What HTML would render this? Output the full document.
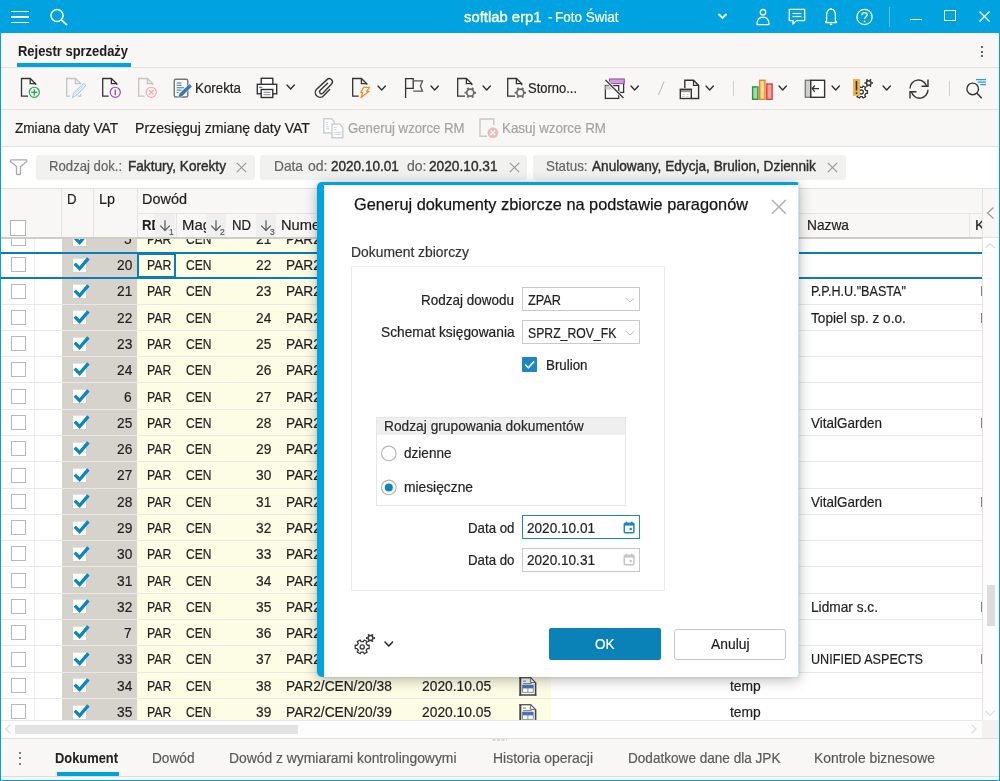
<!DOCTYPE html>
<html><head><meta charset="utf-8"><style>
html,body{margin:0;padding:0;}
body{width:1000px;height:781px;overflow:hidden;position:relative;font-family:"Liberation Sans",sans-serif;}
.t{position:absolute;white-space:nowrap;line-height:1;transform-origin:0 0;-webkit-text-stroke-width:0.2px;}
#root{position:absolute;left:0;top:0;width:1000px;height:781px;overflow:hidden;will-change:transform;background:#f8f7f6}
svg{overflow:visible}
</style></head><body>
<div id="root">
<div style="position:absolute;left:0.00px;top:0.00px;width:1000.00px;height:781.00px;background:#f8f7f6"></div>
<div style="position:absolute;left:0.00px;top:0.00px;width:1000.00px;height:33.00px;background:#00a3e0"></div>
<div style="position:absolute;left:11.00px;top:10.50px;width:18.00px;height:1.50px;background:#fff"></div>
<div style="position:absolute;left:11.00px;top:16.00px;width:18.00px;height:1.50px;background:#fff"></div>
<div style="position:absolute;left:11.00px;top:21.50px;width:18.00px;height:1.50px;background:#fff"></div>
<svg style="position:absolute;left:48.00px;top:7.00px;" width="24" height="22" viewBox="0 0 24 22"><circle cx="9" cy="8.5" r="6" fill="none" stroke="#fff" stroke-width="1.6"/><line x1="13.3" y1="12.8" x2="19" y2="18" stroke="#fff" stroke-width="1.7"/></svg>
<div class="t" style="left:464.00px;top:10.30px;font-size:14.30px;font-weight:400;color:#fff;transform:scaleX(1.0385);-webkit-text-stroke:0.35px #fff;">softlab erp1</div>
<div class="t" style="left:548.00px;top:10.30px;font-size:14.30px;font-weight:400;color:#fff;transform:scaleX(0.9661);">-</div>
<div class="t" style="left:555.00px;top:10.30px;font-size:14.30px;font-weight:400;color:#fff;transform:scaleX(0.9415);">Foto Świat</div>
<svg style="position:absolute;left:716.00px;top:11.00px;" width="13" height="10" viewBox="0 0 13 10"><polyline points="2.5,3 6.5,7 10.5,3" fill="none" stroke="#fff" stroke-width="1.8"/></svg>
<svg style="position:absolute;left:755.00px;top:8.00px;" width="16" height="19" viewBox="0 0 16 19"><circle cx="8" cy="4.2" r="2.7" fill="none" stroke="#fff" stroke-width="1.3"/><path d="M2,16.6 C2,11 4.5,9.2 8,9.2 C11.5,9.2 14,11 14,16.6 Z" fill="none" stroke="#fff" stroke-width="1.3"/></svg>
<svg style="position:absolute;left:787.00px;top:7.00px;" width="20" height="20" viewBox="0 0 20 20"><path d="M2.3,2.3 H17.7 V13.6 H9.5 L6,17 V13.6 H2.3 Z" fill="none" stroke="#fff" stroke-width="1.3" stroke-linejoin="round"/><line x1="5.5" y1="6.5" x2="14.5" y2="6.5" stroke="#fff" stroke-width="1.2"/><line x1="5.5" y1="9.5" x2="14.5" y2="9.5" stroke="#fff" stroke-width="1.2"/></svg>
<svg style="position:absolute;left:823.00px;top:7.00px;" width="16" height="20" viewBox="0 0 16 20"><path d="M8,2.2 C4.7,2.2 3.6,5 3.6,8.5 V14.5 H2.6 V15.6 H13.4 V14.5 H12.4 V8.5 C12.4,5 11.3,2.2 8,2.2 Z" fill="none" stroke="#fff" stroke-width="1.3" stroke-linejoin="round"/><circle cx="8" cy="2" r="0.9" fill="#fff"/><rect x="6.8" y="16.6" width="2.4" height="1.5" fill="#fff"/></svg>
<svg style="position:absolute;left:855.00px;top:8.00px;" width="19" height="19" viewBox="0 0 19 19"><circle cx="9.5" cy="9" r="7.6" fill="none" stroke="#fff" stroke-width="1.3"/><path d="M6.9,7.2 C6.9,5.5 8,4.6 9.5,4.6 C11,4.6 12.1,5.5 12.1,7 C12.1,8.6 9.6,9 9.6,11" fill="none" stroke="#fff" stroke-width="1.3"/><circle cx="9.6" cy="13.4" r="0.9" fill="#fff"/></svg>
<div style="position:absolute;left:889.00px;top:7.00px;width:1.00px;height:20.00px;background:#5ec3ea"></div>
<div style="position:absolute;left:910.00px;top:19.00px;width:12.00px;height:1.20px;background:#fff"></div>
<div style="position:absolute;left:944.00px;top:10.00px;width:11.50px;height:11.00px;border:1.3px solid #fff;box-sizing:border-box"></div>
<svg style="position:absolute;left:978.00px;top:10.00px;" width="13" height="13" viewBox="0 0 13 13"><line x1="1.5" y1="1.5" x2="11.5" y2="11.5" stroke="#fff" stroke-width="1.3"/><line x1="11.5" y1="1.5" x2="1.5" y2="11.5" stroke="#fff" stroke-width="1.3"/></svg>
<div style="position:absolute;left:1.00px;top:33.00px;width:998.00px;height:1.00px;background:#fdfdfd"></div>
<div class="t" style="left:18.20px;top:44.10px;font-size:14.30px;font-weight:700;color:#1f1f1f;transform:scaleX(0.9046);-webkit-text-stroke-width:0.05px;">Rejestr sprzedaży</div>
<div style="position:absolute;left:17.00px;top:63.00px;width:114.00px;height:4.00px;background:#00a3e0"></div>
<div style="position:absolute;left:981.00px;top:45.60px;width:2.20px;height:2.20px;background:#333;border-radius:50%"></div>
<div style="position:absolute;left:981.00px;top:50.50px;width:2.20px;height:2.20px;background:#333;border-radius:50%"></div>
<div style="position:absolute;left:981.00px;top:55.30px;width:2.20px;height:2.20px;background:#333;border-radius:50%"></div>
<div style="position:absolute;left:1.00px;top:67.00px;width:998.00px;height:1.00px;background:#e3e1de"></div>
<svg style="position:absolute;left:0;top:0" width="1000" height="120" viewBox="0 0 1000 120"><path d="M28.00,96.20 H21.50 V78.50 H30.20 L35.60,83.70 V85.00" fill="none" stroke="#333" stroke-width="1.3" stroke-linejoin="miter"/><path d="M30.20,78.50 V83.70 H35.60" fill="none" stroke="#333" stroke-width="1.3"/></svg>
<svg style="position:absolute;left:0;top:0" width="1000" height="120" viewBox="0 0 1000 120"><circle cx="34.3" cy="92.3" r="5.05" fill="none" stroke="#1aa64a" stroke-width="1.15"/><line x1="34.3" y1="89.2" x2="34.3" y2="95.4" stroke="#1aa64a" stroke-width="1.3"/><line x1="31.2" y1="92.3" x2="37.4" y2="92.3" stroke="#1aa64a" stroke-width="1.3"/></svg>
<svg style="position:absolute;left:0;top:0" width="1000" height="120" viewBox="0 0 1000 120"><path d="M70,96.2 H66.7 V78.5 H75.4 L80.8,83.7" fill="none" stroke="#c4c4c4" stroke-width="1.3"/><path d="M75.4,78.5 V83.7 H80.8" fill="none" stroke="#c4c4c4" stroke-width="1.3"/><path d="M77.7,96.2 H80.8 V94" fill="none" stroke="#c4c4c4" stroke-width="1.3"/><path d="M72.3,97.6 L73.6,93.2 L82.6,84.3 C83.3,83.6 84.4,83.6 85,84.3 C85.7,85 85.7,86 85,86.7 L76,95.6 Z" fill="#f8f7f6" stroke="#a9d2ee" stroke-width="1.1" stroke-linejoin="round"/><line x1="74.6" y1="94.3" x2="83.2" y2="85.8" stroke="#a9d2ee" stroke-width="0.8"/></svg>
<svg style="position:absolute;left:0;top:0" width="1000" height="120" viewBox="0 0 1000 120"><path d="M108.70,96.20 H102.70 V78.50 H111.40 L116.80,83.70 V85.00" fill="none" stroke="#333" stroke-width="1.3" stroke-linejoin="miter"/><path d="M111.40,78.50 V83.70 H116.80" fill="none" stroke="#333" stroke-width="1.3"/></svg>
<svg style="position:absolute;left:0;top:0" width="1000" height="120" viewBox="0 0 1000 120"><circle cx="115.3" cy="92.3" r="5.05" fill="none" stroke="#9d47b3" stroke-width="1.15"/><line x1="115.3" y1="89.6" x2="115.3" y2="95.2" stroke="#9d47b3" stroke-width="1.3"/></svg>
<svg style="position:absolute;left:0;top:0" width="1000" height="120" viewBox="0 0 1000 120"><path d="M144.70,96.20 H138.70 V78.50 H147.40 L152.80,83.70 V85.00" fill="none" stroke="#c4c4c4" stroke-width="1.3" stroke-linejoin="miter"/><path d="M147.40,78.50 V83.70 H152.80" fill="none" stroke="#c4c4c4" stroke-width="1.3"/></svg>
<svg style="position:absolute;left:0;top:0" width="1000" height="120" viewBox="0 0 1000 120"><circle cx="151.3" cy="92.3" r="5.05" fill="none" stroke="#f3a9ad" stroke-width="1.15"/><line x1="149" y1="90" x2="153.6" y2="94.6" stroke="#f3a9ad" stroke-width="1.2"/><line x1="153.6" y1="90" x2="149" y2="94.6" stroke="#f3a9ad" stroke-width="1.2"/></svg>
<svg style="position:absolute;left:172.50px;top:77.50px;" width="22" height="22" viewBox="0 0 22 22"><rect x="1.3" y="1.3" width="13.4" height="17.8" rx="1.5" fill="#fff" stroke="#777" stroke-width="1.5"/><g stroke="#3a75c0" stroke-width="1.1"><line x1="3.6" y1="5" x2="8.5" y2="5"/><line x1="3.6" y1="7.3" x2="8.5" y2="7.3"/><line x1="3.6" y1="9.8" x2="11" y2="9.8"/><line x1="3.6" y1="12.1" x2="8.5" y2="12.1"/><line x1="3.6" y1="14.6" x2="5.5" y2="14.6"/></g><path d="M4.7,20.2 L6.2,15.6 L16.4,5.8 L19.2,8.6 L9,18.6 Z" fill="#3a75c0" stroke="#f8f7f6" stroke-width="0.6"/></svg>
<div class="t" style="left:195.30px;top:80.70px;font-size:14.30px;font-weight:400;color:#1f1f1f;transform:scaleX(0.9335);">Korekta</div>
<svg style="position:absolute;left:256.00px;top:77.00px;" width="22" height="22" viewBox="0 0 22 22"><rect x="5.2" y="1.3" width="11.6" height="6.5" fill="#fff" stroke="#333" stroke-width="1.4"/><rect x="1.3" y="7.3" width="19.4" height="9.5" fill="#fff" stroke="#333" stroke-width="1.4"/><rect x="5.2" y="12.5" width="11.6" height="8" fill="#fff" stroke="#333" stroke-width="1.4"/><line x1="7.5" y1="15.3" x2="14.5" y2="15.3" stroke="#888" stroke-width="1"/><line x1="7.5" y1="17.7" x2="14.5" y2="17.7" stroke="#888" stroke-width="1"/><line x1="3.6" y1="10.4" x2="5.8" y2="10.4" stroke="#2a8ad8" stroke-width="1.2" stroke-linecap="round"/></svg>
<svg style="position:absolute;left:286.20px;top:84.20px;" width="9.4" height="6.0" viewBox="0 0 9.4 6.0"><polyline points="1,1 4.70,5.00 8.40,1" fill="none" stroke="#2a2a2a" stroke-width="1.3" stroke-linecap="round" stroke-linejoin="round"/></svg>
<svg style="position:absolute;left:0;top:0" width="1000" height="120" viewBox="0 0 1000 120"><path d="M329.7,89.4 L323.6,95.8 A4.5,4.5 0 0 1 316.6,89.3 L327,79.6 A3.2,3.2 0 0 1 331.8,83.8 L322.8,93.2 A1.95,1.95 0 0 1 320,90.5 L327.6,83.3" fill="none" stroke="#3a3a3a" stroke-width="1.45" stroke-linecap="round"/></svg>
<svg style="position:absolute;left:0;top:0" width="1000" height="120" viewBox="0 0 1000 120"><path d="M358.70,96.20 H352.70 V78.50 H361.40 L366.80,83.70 V84.80" fill="none" stroke="#333" stroke-width="1.3" stroke-linejoin="miter"/><path d="M361.40,78.50 V83.70 H366.80" fill="none" stroke="#333" stroke-width="1.3"/></svg>
<svg style="position:absolute;left:0;top:0" width="1000" height="120" viewBox="0 0 1000 120"><path d="M363.6,87.4 H369.6 L366.6,91.3 H369.2 L361,97.5 L362.8,92.6 H360.8 Z" fill="#fff" stroke="#f08a2a" stroke-width="1.2" stroke-linejoin="round"/></svg>
<svg style="position:absolute;left:377.20px;top:84.50px;" width="9.4" height="6.0" viewBox="0 0 9.4 6.0"><polyline points="1,1 4.70,5.00 8.40,1" fill="none" stroke="#2a2a2a" stroke-width="1.3" stroke-linecap="round" stroke-linejoin="round"/></svg>
<svg style="position:absolute;left:0;top:0" width="1000" height="120" viewBox="0 0 1000 120"><line x1="405.6" y1="78" x2="405.6" y2="98" stroke="#333" stroke-width="1.3"/><path d="M405.6,78.6 H413.2 V88.4 H405.6" fill="none" stroke="#333" stroke-width="1.3"/><path d="M413.2,80.9 H422.5 L420.4,86.1 L422.5,91.2 H413.2" fill="none" stroke="#555" stroke-width="1.3" stroke-linejoin="miter"/></svg>
<svg style="position:absolute;left:429.50px;top:84.50px;" width="9.4" height="6.0" viewBox="0 0 9.4 6.0"><polyline points="1,1 4.70,5.00 8.40,1" fill="none" stroke="#2a2a2a" stroke-width="1.3" stroke-linecap="round" stroke-linejoin="round"/></svg>
<svg style="position:absolute;left:0;top:0" width="1000" height="120" viewBox="0 0 1000 120"><path d="M465.00,96.20 H457.70 V78.50 H466.40 L471.80,83.70 V85.30" fill="none" stroke="#333" stroke-width="1.3" stroke-linejoin="miter"/><path d="M466.40,78.50 V83.70 H471.80" fill="none" stroke="#333" stroke-width="1.3"/></svg>
<svg style="position:absolute;left:0;top:0" width="1000" height="120" viewBox="0 0 1000 120"><circle cx="470.30" cy="92.70" r="3.50" fill="none" stroke="#6a6a6a" stroke-width="1.70"/><line x1="474.10" y1="92.70" x2="476.00" y2="92.70" stroke="#6a6a6a" stroke-width="1.90"/><line x1="472.20" y1="95.99" x2="473.15" y2="97.64" stroke="#6a6a6a" stroke-width="1.90"/><line x1="468.40" y1="95.99" x2="467.45" y2="97.64" stroke="#6a6a6a" stroke-width="1.90"/><line x1="466.50" y1="92.70" x2="464.60" y2="92.70" stroke="#6a6a6a" stroke-width="1.90"/><line x1="468.40" y1="89.41" x2="467.45" y2="87.76" stroke="#6a6a6a" stroke-width="1.90"/><line x1="472.20" y1="89.41" x2="473.15" y2="87.76" stroke="#6a6a6a" stroke-width="1.90"/></svg>
<svg style="position:absolute;left:481.60px;top:84.50px;" width="9.4" height="6.0" viewBox="0 0 9.4 6.0"><polyline points="1,1 4.70,5.00 8.40,1" fill="none" stroke="#2a2a2a" stroke-width="1.3" stroke-linecap="round" stroke-linejoin="round"/></svg>
<svg style="position:absolute;left:0;top:0" width="1000" height="120" viewBox="0 0 1000 120"><path d="M515.00,96.20 H507.70 V78.50 H516.40 L521.80,83.70 V85.30" fill="none" stroke="#333" stroke-width="1.3" stroke-linejoin="miter"/><path d="M516.40,78.50 V83.70 H521.80" fill="none" stroke="#333" stroke-width="1.3"/></svg>
<svg style="position:absolute;left:0;top:0" width="1000" height="120" viewBox="0 0 1000 120"><circle cx="520.30" cy="92.70" r="3.50" fill="none" stroke="#6a6a6a" stroke-width="1.70"/><line x1="524.10" y1="92.70" x2="526.00" y2="92.70" stroke="#6a6a6a" stroke-width="1.90"/><line x1="522.20" y1="95.99" x2="523.15" y2="97.64" stroke="#6a6a6a" stroke-width="1.90"/><line x1="518.40" y1="95.99" x2="517.45" y2="97.64" stroke="#6a6a6a" stroke-width="1.90"/><line x1="516.50" y1="92.70" x2="514.60" y2="92.70" stroke="#6a6a6a" stroke-width="1.90"/><line x1="518.40" y1="89.41" x2="517.45" y2="87.76" stroke="#6a6a6a" stroke-width="1.90"/><line x1="522.20" y1="89.41" x2="523.15" y2="87.76" stroke="#6a6a6a" stroke-width="1.90"/></svg>
<div class="t" style="left:528.40px;top:81.10px;font-size:14.30px;font-weight:400;color:#1f1f1f;transform:scaleX(0.9066);">Storno...</div>
<svg style="position:absolute;left:603.50px;top:78.00px;" width="22" height="22" viewBox="0 0 22 22"><rect x="6.3" y="1.6" width="13.3" height="12.8" fill="#fff" stroke="#333" stroke-width="1.3"/><rect x="5.6" y="1" width="14.6" height="4.6" fill="#cf9fd6" stroke="#a04fb5" stroke-width="1.1"/><rect x="1.4" y="7.6" width="13.3" height="12.8" fill="#fff" stroke="#333" stroke-width="1.3"/><rect x="1.4" y="7.6" width="7" height="4" fill="#ccc"/><line x1="1.5" y1="2" x2="19.5" y2="20" stroke="#f8f7f6" stroke-width="3"/><line x1="1.5" y1="2" x2="19.5" y2="20" stroke="#333" stroke-width="1.2"/></svg>
<svg style="position:absolute;left:630.30px;top:85.20px;" width="9.4" height="6.0" viewBox="0 0 9.4 6.0"><polyline points="1,1 4.70,5.00 8.40,1" fill="none" stroke="#2a2a2a" stroke-width="1.3" stroke-linecap="round" stroke-linejoin="round"/></svg>
<svg style="position:absolute;left:656.00px;top:80.00px;" width="10" height="17" viewBox="0 0 10 17"><line x1="8" y1="1.5" x2="2.5" y2="15" stroke="#c8c8c8" stroke-width="1.3"/></svg>
<svg style="position:absolute;left:678.50px;top:78.50px;" width="22" height="22" viewBox="0 0 22 22"><path d="M5.8,9 V1.3 H14.5 L19.6,6.4 V19.5 H12.5" fill="none" stroke="#333" stroke-width="1.4"/><path d="M14.5,1.3 V6.4 H19.6" fill="none" stroke="#333" stroke-width="1.2"/><rect x="1.3" y="10.3" width="11" height="9.2" fill="#fff" stroke="#333" stroke-width="1.4"/><rect x="2" y="11" width="9.6" height="2.2" fill="#999"/><g stroke="#bbb" stroke-width="0.8"><line x1="3.5" y1="15.5" x2="5.5" y2="15.5"/><line x1="7.5" y1="15.5" x2="9.5" y2="15.5"/><line x1="3.5" y1="17.5" x2="5.5" y2="17.5"/><line x1="7.5" y1="17.5" x2="9.5" y2="17.5"/></g></svg>
<svg style="position:absolute;left:704.80px;top:85.20px;" width="9.4" height="6.0" viewBox="0 0 9.4 6.0"><polyline points="1,1 4.70,5.00 8.40,1" fill="none" stroke="#2a2a2a" stroke-width="1.3" stroke-linecap="round" stroke-linejoin="round"/></svg>
<div style="position:absolute;left:732.50px;top:81.20px;width:1.30px;height:15.00px;background:#cfcfcf"></div>
<svg style="position:absolute;left:751.00px;top:78.50px;" width="22" height="22" viewBox="0 0 22 22"><rect x="1.6" y="7.9" width="5.3" height="12.4" fill="#a8d8a8" stroke="#1f9a3f" stroke-width="1.4"/><rect x="8.7" y="1.3" width="5.3" height="19" fill="#f6d98a" stroke="#e9822a" stroke-width="1.4"/><rect x="15.8" y="5" width="5.3" height="15.3" fill="#f0a5a5" stroke="#e23a3a" stroke-width="1.4"/></svg>
<svg style="position:absolute;left:778.00px;top:85.20px;" width="9.4" height="6.0" viewBox="0 0 9.4 6.0"><polyline points="1,1 4.70,5.00 8.40,1" fill="none" stroke="#2a2a2a" stroke-width="1.3" stroke-linecap="round" stroke-linejoin="round"/></svg>
<svg style="position:absolute;left:804.00px;top:79.00px;" width="22" height="20" viewBox="0 0 22 20"><rect x="1.3" y="1.3" width="5.5" height="17" fill="#cfcfcf" stroke="#777" stroke-width="1.3"/><rect x="6.8" y="1.3" width="13.8" height="17" fill="#fff" stroke="#333" stroke-width="1.4"/><polyline points="10.8,6.5 8.3,9.6 10.8,12.8" fill="none" stroke="#333" stroke-width="1.3"/><line x1="8.5" y1="9.6" x2="15" y2="9.6" stroke="#333" stroke-width="1.3"/></svg>
<svg style="position:absolute;left:830.80px;top:85.20px;" width="9.4" height="6.0" viewBox="0 0 9.4 6.0"><polyline points="1,1 4.70,5.00 8.40,1" fill="none" stroke="#2a2a2a" stroke-width="1.3" stroke-linecap="round" stroke-linejoin="round"/></svg>
<svg style="position:absolute;left:852.00px;top:78.00px;" width="24" height="22" viewBox="0 0 24 22"><polygon points="13.73,12.54 15.43,12.53 15.43,15.47 13.73,15.46 12.78,17.11 13.64,18.57 11.09,20.04 10.25,18.56 8.35,18.56 7.51,20.04 4.96,18.57 5.82,17.11 4.87,15.46 3.17,15.47 3.17,12.53 4.87,12.54 5.82,10.89 4.96,9.43 7.51,7.96 8.35,9.44 10.25,9.44 11.09,7.96 13.64,9.43 12.78,10.89" fill="#fff" stroke="#333" stroke-width="1.3" stroke-linejoin="round"/><circle cx="9.30" cy="14.00" r="2.00" fill="none" stroke="#333" stroke-width="1.3"/><circle cx="16.70" cy="5.00" r="2.30" fill="none" stroke="#333" stroke-width="1.50"/><line x1="19.50" y1="5.00" x2="21.00" y2="5.00" stroke="#333" stroke-width="1.70"/><line x1="18.10" y1="7.42" x2="18.85" y2="8.72" stroke="#333" stroke-width="1.70"/><line x1="15.30" y1="7.42" x2="14.55" y2="8.72" stroke="#333" stroke-width="1.70"/><line x1="13.90" y1="5.00" x2="12.40" y2="5.00" stroke="#333" stroke-width="1.70"/><line x1="15.30" y1="2.58" x2="14.55" y2="1.28" stroke="#333" stroke-width="1.70"/><line x1="18.10" y1="2.58" x2="18.85" y2="1.28" stroke="#333" stroke-width="1.70"/><rect x="1" y="1" width="7.1" height="16.8" fill="#e8b54c"/><line x1="4.5" y1="3" x2="4.5" y2="12.5" stroke="#333" stroke-width="1.6"/><line x1="4.5" y1="14.3" x2="4.5" y2="16" stroke="#333" stroke-width="1.6"/></svg>
<svg style="position:absolute;left:882.30px;top:85.40px;" width="9.4" height="6.0" viewBox="0 0 9.4 6.0"><polyline points="1,1 4.70,5.00 8.40,1" fill="none" stroke="#2a2a2a" stroke-width="1.3" stroke-linecap="round" stroke-linejoin="round"/></svg>
<svg style="position:absolute;left:907.00px;top:77.00px;" width="24" height="24" viewBox="0 0 24 24"><path d="M3,11.5 A8.4,8.4 0 0 1 19.5,9.2" fill="none" stroke="#333" stroke-width="1.4"/><polyline points="21,2.5 21,9.3 14.5,9.3" fill="none" stroke="#333" stroke-width="1.4"/><path d="M21,12.8 A8.4,8.4 0 0 1 4.5,15" fill="none" stroke="#333" stroke-width="1.4"/><polyline points="3,21.5 3,14.8 9.5,14.8" fill="none" stroke="#333" stroke-width="1.4"/></svg>
<div style="position:absolute;left:948.70px;top:81.20px;width:1.20px;height:14.40px;background:#cfcfcf"></div>
<svg style="position:absolute;left:965.00px;top:78.00px;" width="24" height="22" viewBox="0 0 24 22"><circle cx="7.7" cy="10.9" r="5.8" fill="none" stroke="#333" stroke-width="1.4"/><line x1="11.8" y1="15" x2="16.7" y2="20.2" stroke="#333" stroke-width="1.5"/><line x1="11" y1="1.6" x2="21" y2="1.6" stroke="#2e9ae0" stroke-width="1.3"/><line x1="12.6" y1="4.1" x2="21" y2="4.1" stroke="#2e9ae0" stroke-width="1.3"/><line x1="15.3" y1="6.6" x2="21" y2="6.6" stroke="#2e9ae0" stroke-width="1.3"/></svg>
<svg style="position:absolute;left:322.50px;top:117.50px;" width="22" height="22" viewBox="0 0 22 22"><path d="M0.8,0.8 H8.5 L11.2,3.5 V15 H0.8 Z" fill="#fff" stroke="#cfcfcf" stroke-width="1.5"/><g stroke="#bcd0e6" stroke-width="0.9"><line x1="3" y1="4.3" x2="5" y2="4.3"/><line x1="3" y1="6.3" x2="5" y2="6.3"/><line x1="3" y1="8.8" x2="6.5" y2="8.8"/><line x1="3" y1="10.8" x2="6.5" y2="10.8"/></g><path d="M9,6 H16.5 L19.8,9.3 V19.8 H9 Z" fill="#fff" stroke="#cfcfcf" stroke-width="1.5"/><g stroke="#bcd0e6" stroke-width="0.9"><line x1="10.8" y1="9.5" x2="13.5" y2="9.5"/><line x1="10.8" y1="11.5" x2="13.5" y2="11.5"/><line x1="10.8" y1="14.4" x2="18.3" y2="14.4"/><line x1="10.8" y1="16.4" x2="18.3" y2="16.4"/></g></svg>
<svg style="position:absolute;left:478.50px;top:117.50px;" width="22" height="22" viewBox="0 0 22 22"><path d="M8,18.3 H1 V1 H14.8 V7" fill="none" stroke="#c8c8c8" stroke-width="1.4"/><circle cx="13.9" cy="14.7" r="5.4" fill="#eebcb4"/><line x1="11.6" y1="12.4" x2="16.2" y2="17" stroke="#fff" stroke-width="1.4"/><line x1="16.2" y1="12.4" x2="11.6" y2="17" stroke="#fff" stroke-width="1.4"/></svg>
<div style="position:absolute;left:1.00px;top:109.00px;width:998.00px;height:1.00px;background:#e3e1de"></div>
<div class="t" style="left:15.30px;top:120.90px;font-size:14.30px;font-weight:400;color:#1f1f1f;transform:scaleX(0.9507);">Zmiana daty VAT</div>
<div class="t" style="left:135.40px;top:120.90px;font-size:14.30px;font-weight:400;color:#1f1f1f;transform:scaleX(0.9860);">Przesięguj zmianę daty VAT</div>
<div class="t" style="left:347.80px;top:120.90px;font-size:14.30px;font-weight:400;color:#a3a3a3;transform:scaleX(0.9229);">Generuj wzorce RM</div>
<div class="t" style="left:502.20px;top:120.90px;font-size:14.30px;font-weight:400;color:#a3a3a3;transform:scaleX(0.9349);">Kasuj wzorce RM</div>
<div style="position:absolute;left:1.00px;top:146.00px;width:998.00px;height:1.00px;background:#e3e1de"></div>
<div style="position:absolute;left:1.00px;top:147.00px;width:998.00px;height:41.00px;background:#fff"></div>
<svg style="position:absolute;left:0;top:140px" width="40" height="50" viewBox="0 140 40 50"><path d="M11.2,159.8 H26 Q26.8,159.8 26.8,160.6 V161.6 L20.5,166.6 V173.8 Q20.5,174.5 19.8,174.5 H17.2 Q16.5,174.5 16.5,173.8 V166.6 L10.4,161.6 V160.6 Q10.4,159.8 11.2,159.8 Z" fill="none" stroke="#a9a9a9" stroke-width="1.3" stroke-linejoin="round"/></svg>
<div style="position:absolute;left:36.00px;top:155.00px;width:218.50px;height:24.50px;background:#f1f1f0;border-radius:3px"></div>
<div class="t" style="left:49.00px;top:160.43px;font-size:13.90px;font-weight:400;color:#666;transform:scaleX(0.9474);">Rodzaj dok.:</div>
<div class="t" style="left:127.80px;top:160.43px;font-size:13.90px;font-weight:500;color:#2f2f2f;transform:scaleX(0.9785);-webkit-text-stroke:0.4px #2f2f2f;">Faktury, Korekty</div>
<svg style="position:absolute;left:236.20px;top:161.50px;" width="11" height="11" viewBox="0 0 11 11"><line x1="0.8" y1="0.8" x2="10.2" y2="10.2" stroke="#9a9a9a" stroke-width="1.2"/><line x1="10.2" y1="0.8" x2="0.8" y2="10.2" stroke="#9a9a9a" stroke-width="1.2"/></svg>
<div style="position:absolute;left:260.40px;top:155.00px;width:267.00px;height:24.50px;background:#f1f1f0;border-radius:3px"></div>
<div class="t" style="left:273.80px;top:160.43px;font-size:13.90px;font-weight:400;color:#666;transform:scaleX(0.9878);">Data</div>
<div class="t" style="left:308.00px;top:160.43px;font-size:13.90px;font-weight:400;color:#666;transform:scaleX(1.0093);">od:</div>
<div class="t" style="left:330.70px;top:160.43px;font-size:13.90px;font-weight:500;color:#2f2f2f;transform:scaleX(0.9747);-webkit-text-stroke:0.4px #2f2f2f;">2020.10.01</div>
<div class="t" style="left:406.90px;top:160.43px;font-size:13.90px;font-weight:400;color:#666;transform:scaleX(1.0093);">do:</div>
<div class="t" style="left:429.30px;top:160.43px;font-size:13.90px;font-weight:500;color:#2f2f2f;transform:scaleX(0.9862);-webkit-text-stroke:0.4px #2f2f2f;">2020.10.31</div>
<svg style="position:absolute;left:508.60px;top:161.50px;" width="11" height="11" viewBox="0 0 11 11"><line x1="0.8" y1="0.8" x2="10.2" y2="10.2" stroke="#9a9a9a" stroke-width="1.2"/><line x1="10.2" y1="0.8" x2="0.8" y2="10.2" stroke="#9a9a9a" stroke-width="1.2"/></svg>
<div style="position:absolute;left:533.40px;top:155.00px;width:312.60px;height:24.50px;background:#f1f1f0;border-radius:3px"></div>
<div class="t" style="left:546.00px;top:160.43px;font-size:13.90px;font-weight:400;color:#666;transform:scaleX(0.9615);">Status:</div>
<div class="t" style="left:592.40px;top:160.43px;font-size:13.90px;font-weight:500;color:#2f2f2f;transform:scaleX(0.9806);-webkit-text-stroke:0.4px #2f2f2f;">Anulowany, Edycja, Brulion, Dziennik</div>
<svg style="position:absolute;left:826.60px;top:161.50px;" width="11" height="11" viewBox="0 0 11 11"><line x1="0.8" y1="0.8" x2="10.2" y2="10.2" stroke="#9a9a9a" stroke-width="1.2"/><line x1="10.2" y1="0.8" x2="0.8" y2="10.2" stroke="#9a9a9a" stroke-width="1.2"/></svg>
<div style="position:absolute;left:1.00px;top:188.00px;width:998.00px;height:1.00px;background:#e3e1de"></div>
<div style="position:absolute;left:1.00px;top:189.00px;width:981.00px;height:48.00px;background:#f8f7f6"></div>
<div style="position:absolute;left:137.00px;top:213.00px;width:845.00px;height:1.00px;background:#e6e4e1"></div>
<div style="position:absolute;left:61.00px;top:189.00px;width:1.00px;height:48.00px;background:#e6e4e1"></div>
<div style="position:absolute;left:93.00px;top:189.00px;width:1.00px;height:48.00px;background:#e6e4e1"></div>
<div style="position:absolute;left:137.00px;top:189.00px;width:1.00px;height:48.00px;background:#e6e4e1"></div>
<div style="position:absolute;left:176.00px;top:213.00px;width:1.00px;height:24.00px;background:#e6e4e1"></div>
<div style="position:absolute;left:225.00px;top:213.00px;width:1.00px;height:24.00px;background:#e6e4e1"></div>
<div style="position:absolute;left:275.00px;top:213.00px;width:1.00px;height:24.00px;background:#e6e4e1"></div>
<div style="position:absolute;left:969.00px;top:213.00px;width:1.00px;height:24.00px;background:#e6e4e1"></div>
<div style="position:absolute;left:155.20px;top:214.00px;width:20.00px;height:23.00px;background:#efefef"></div>
<div style="position:absolute;left:205.60px;top:214.00px;width:20.00px;height:23.00px;background:#efefef"></div>
<div style="position:absolute;left:255.60px;top:214.00px;width:20.00px;height:23.00px;background:#efefef"></div>
<div style="position:absolute;left:1.00px;top:237.00px;width:981.00px;height:1.50px;background:#cfcdca"></div>
<div class="t" style="left:67.30px;top:192.40px;font-size:14.30px;font-weight:400;color:#1f1f1f;transform:scaleX(0.9199);">D</div>
<div class="t" style="left:98.80px;top:192.40px;font-size:14.30px;font-weight:400;color:#1f1f1f;transform:scaleX(1.0060);">Lp</div>
<div class="t" style="left:142.40px;top:192.40px;font-size:14.30px;font-weight:400;color:#1f1f1f;transform:scaleX(1.0110);">Dowód</div>
<div style="position:absolute;left:10.00px;top:220.00px;width:15.50px;height:15.50px;border:1.2px solid #b3b3b3;background:#fff;box-sizing:border-box"></div>
<div style="position:absolute;left:137px;top:214px;width:18.2px;height:23px;overflow:hidden">
<div class="t" style="left:5.20px;top:4.53px;font-size:13.90px;font-weight:700;color:#1f1f1f;transform:scaleX(0.9464);-webkit-text-stroke-width:0.05px;">RD</div>
</div>
<div style="position:absolute;left:176.5px;top:214px;width:29px;height:23px;overflow:hidden">
<div class="t" style="left:5.10px;top:4.20px;font-size:14.30px;font-weight:400;color:#1f1f1f;transform:scaleX(1.0426);">Mag</div>
</div>
<div class="t" style="left:231.50px;top:218.20px;font-size:14.30px;font-weight:400;color:#1f1f1f;transform:scaleX(0.9199);">ND</div>
<div style="position:absolute;left:276.5px;top:214px;width:40px;height:23px;overflow:hidden">
<div class="t" style="left:4.90px;top:4.20px;font-size:14.30px;font-weight:400;color:#1f1f1f;transform:scaleX(1.0255);">Numer</div>
</div>
<div class="t" style="left:806.60px;top:218.20px;font-size:14.30px;font-weight:400;color:#1f1f1f;transform:scaleX(0.9609);">Nazwa</div>
<div style="position:absolute;left:970.5px;top:214px;width:11.5px;height:23px;overflow:hidden">
<div class="t" style="left:4.70px;top:4.20px;font-size:14.30px;font-weight:400;color:#1f1f1f;transform:scaleX(1.0219);">Kod</div>
</div>
<svg style="position:absolute;left:155.20px;top:218.00px;" width="20" height="19" viewBox="0 0 20 19"><line x1="10" y1="2.2" x2="10" y2="12.4" stroke="#555" stroke-width="1.2"/><polyline points="5.2,7.6 10,12.4 14.8,7.6" fill="none" stroke="#555" stroke-width="1.2"/></svg>
<div class="t" style="left:169.40px;top:227.04px;font-size:9.40px;font-weight:400;color:#555;transform:scaleX(0.9000);">1</div>
<svg style="position:absolute;left:205.60px;top:218.00px;" width="20" height="19" viewBox="0 0 20 19"><line x1="10" y1="2.2" x2="10" y2="12.4" stroke="#555" stroke-width="1.2"/><polyline points="5.2,7.6 10,12.4 14.8,7.6" fill="none" stroke="#555" stroke-width="1.2"/></svg>
<div class="t" style="left:219.80px;top:227.04px;font-size:9.40px;font-weight:400;color:#555;transform:scaleX(0.9000);">2</div>
<svg style="position:absolute;left:255.60px;top:218.00px;" width="20" height="19" viewBox="0 0 20 19"><line x1="10" y1="2.2" x2="10" y2="12.4" stroke="#555" stroke-width="1.2"/><polyline points="5.2,7.6 10,12.4 14.8,7.6" fill="none" stroke="#555" stroke-width="1.2"/></svg>
<div class="t" style="left:269.80px;top:227.04px;font-size:9.40px;font-weight:400;color:#555;transform:scaleX(0.9000);">3</div>
<div style="position:absolute;left:1px;top:238.50px;width:981px;height:481.50px;overflow:hidden">
<div style="position:absolute;left:0.00px;top:0.00px;width:981.00px;height:481.50px;background:#fff"></div>
<div style="position:absolute;left:61.00px;top:0.00px;width:75.00px;height:481.50px;background:#d6d2cc"></div>
<div style="position:absolute;left:136.00px;top:0.00px;width:414.00px;height:481.50px;background:#fdfde6"></div>
<div style="position:absolute;left:33.20px;top:0.00px;width:1.00px;height:481.50px;background:#ececec"></div>
<div style="position:absolute;left:10.00px;top:-7.48px;width:15.00px;height:15.00px;border:1.2px solid #b8b8b8;background:#fff;box-sizing:border-box"></div>
<div style="position:absolute;left:71.30px;top:-6.98px;width:14.50px;height:15.00px;border:1.2px solid #d2d0cd;border-top-color:#e2e1df;background:#fff;box-sizing:border-box"></div>
<svg style="position:absolute;left:71.00px;top:-9.48px;" width="18" height="17" viewBox="0 0 18 17"><polyline points="3.9,9.8 7.6,13.5 15.3,4.6" fill="none" stroke="#0a86c0" stroke-width="3.3" stroke-linejoin="miter" stroke-linecap="square"/></svg>
<div class="t" style="left:123.17px;top:-6.58px;font-size:14.30px;font-weight:400;color:#1f1f1f;transform:scaleX(0.9600);">5</div>
<div class="t" style="left:146.00px;top:-6.58px;font-size:14.30px;font-weight:400;color:#1f1f1f;transform:scaleX(0.8609);">PAR</div>
<div class="t" style="left:184.60px;top:-6.58px;font-size:14.30px;font-weight:400;color:#1f1f1f;transform:scaleX(0.8413);">CEN</div>
<div class="t" style="left:254.73px;top:-6.58px;font-size:14.30px;font-weight:400;color:#1f1f1f;transform:scaleX(0.9600);">21</div>
<div class="t" style="left:284.60px;top:-6.58px;font-size:14.30px;font-weight:400;color:#1f1f1f;transform:scaleX(0.9599);">PAR2/CEN/20/21</div>
<div class="t" style="left:421.00px;top:-6.58px;font-size:14.30px;font-weight:400;color:#1f1f1f;transform:scaleX(0.9670);">2020.10.05</div>
<svg style="position:absolute;left:517.00px;top:-8.98px;" width="19" height="20" viewBox="0 0 19 20"><rect x="2" y="1.5" width="15.5" height="17.8" fill="#fbfbfb"/><line x1="2.3" y1="1" x2="2.3" y2="19.7" stroke="#444" stroke-width="2"/><line x1="1.5" y1="1.7" x2="12.5" y2="1.7" stroke="#555" stroke-width="1.3"/><path d="M12.3,1.2 L17.8,6.8" stroke="#555" stroke-width="1.2"/><path d="M12.4,1.5 V6.5 H17.6" fill="none" stroke="#666" stroke-width="0.9"/><line x1="17.6" y1="6.5" x2="17.6" y2="19.7" stroke="#444" stroke-width="1.6"/><line x1="1.3" y1="19" x2="18.4" y2="19" stroke="#444" stroke-width="1.5"/><rect x="5" y="4.6" width="3" height="1.1" fill="#8a8a8a"/><rect x="5" y="7" width="8.5" height="1.1" fill="#8a8a8a"/><rect x="4.6" y="9.1" width="10.6" height="7.2" fill="#fff" stroke="#777" stroke-width="0.8"/><rect x="4.6" y="9.1" width="10.6" height="3.3" fill="#3a74c0"/><line x1="9.9" y1="9.1" x2="9.9" y2="16.3" stroke="#777" stroke-width="0.8"/></svg>
<div class="t" style="left:729.00px;top:-6.58px;font-size:14.30px;font-weight:400;color:#1f1f1f;transform:scaleX(0.9689);">temp</div>
<div style="position:absolute;left:10.00px;top:18.80px;width:15.00px;height:15.00px;border:1.2px solid #b8b8b8;background:#fff;box-sizing:border-box"></div>
<div style="position:absolute;left:71.30px;top:19.30px;width:14.50px;height:15.00px;border:1.2px solid #d2d0cd;border-top-color:#e2e1df;background:#fff;box-sizing:border-box"></div>
<svg style="position:absolute;left:71.00px;top:16.80px;" width="18" height="17" viewBox="0 0 18 17"><polyline points="3.9,9.8 7.6,13.5 15.3,4.6" fill="none" stroke="#0a86c0" stroke-width="3.3" stroke-linejoin="miter" stroke-linecap="square"/></svg>
<div class="t" style="left:115.53px;top:19.70px;font-size:14.30px;font-weight:400;color:#1f1f1f;transform:scaleX(0.9600);">20</div>
<div class="t" style="left:146.00px;top:19.70px;font-size:14.30px;font-weight:400;color:#1f1f1f;transform:scaleX(0.8609);">PAR</div>
<div class="t" style="left:184.60px;top:19.70px;font-size:14.30px;font-weight:400;color:#1f1f1f;transform:scaleX(0.8413);">CEN</div>
<div class="t" style="left:254.73px;top:19.70px;font-size:14.30px;font-weight:400;color:#1f1f1f;transform:scaleX(0.9600);">22</div>
<div class="t" style="left:284.60px;top:19.70px;font-size:14.30px;font-weight:400;color:#1f1f1f;transform:scaleX(0.9599);">PAR2/CEN/20/22</div>
<div class="t" style="left:421.00px;top:19.70px;font-size:14.30px;font-weight:400;color:#1f1f1f;transform:scaleX(0.9670);">2020.10.05</div>
<svg style="position:absolute;left:517.00px;top:17.30px;" width="19" height="20" viewBox="0 0 19 20"><rect x="2" y="1.5" width="15.5" height="17.8" fill="#fbfbfb"/><line x1="2.3" y1="1" x2="2.3" y2="19.7" stroke="#444" stroke-width="2"/><line x1="1.5" y1="1.7" x2="12.5" y2="1.7" stroke="#555" stroke-width="1.3"/><path d="M12.3,1.2 L17.8,6.8" stroke="#555" stroke-width="1.2"/><path d="M12.4,1.5 V6.5 H17.6" fill="none" stroke="#666" stroke-width="0.9"/><line x1="17.6" y1="6.5" x2="17.6" y2="19.7" stroke="#444" stroke-width="1.6"/><line x1="1.3" y1="19" x2="18.4" y2="19" stroke="#444" stroke-width="1.5"/><rect x="5" y="4.6" width="3" height="1.1" fill="#8a8a8a"/><rect x="5" y="7" width="8.5" height="1.1" fill="#8a8a8a"/><rect x="4.6" y="9.1" width="10.6" height="7.2" fill="#fff" stroke="#777" stroke-width="0.8"/><rect x="4.6" y="9.1" width="10.6" height="3.3" fill="#3a74c0"/><line x1="9.9" y1="9.1" x2="9.9" y2="16.3" stroke="#777" stroke-width="0.8"/></svg>
<div class="t" style="left:729.00px;top:19.70px;font-size:14.30px;font-weight:400;color:#1f1f1f;transform:scaleX(0.9689);">temp</div>
<div style="position:absolute;left:0.00px;top:13.50px;width:981.00px;height:2.00px;background:#0a7db8"></div>
<div style="position:absolute;left:0.00px;top:38.50px;width:981.00px;height:2.00px;background:#0a7db8"></div>
<div style="position:absolute;left:136.00px;top:14.50px;width:39.00px;height:25.00px;border:2px solid #0a7db8;box-sizing:border-box"></div>
<div style="position:absolute;left:0.00px;top:65.10px;width:981.00px;height:1.00px;background:#e9e8e6"></div>
<div style="position:absolute;left:10.00px;top:45.08px;width:15.00px;height:15.00px;border:1.2px solid #b8b8b8;background:#fff;box-sizing:border-box"></div>
<div style="position:absolute;left:71.30px;top:45.58px;width:14.50px;height:15.00px;border:1.2px solid #d2d0cd;border-top-color:#e2e1df;background:#fff;box-sizing:border-box"></div>
<svg style="position:absolute;left:71.00px;top:43.08px;" width="18" height="17" viewBox="0 0 18 17"><polyline points="3.9,9.8 7.6,13.5 15.3,4.6" fill="none" stroke="#0a86c0" stroke-width="3.3" stroke-linejoin="miter" stroke-linecap="square"/></svg>
<div class="t" style="left:115.53px;top:45.98px;font-size:14.30px;font-weight:400;color:#1f1f1f;transform:scaleX(0.9600);">21</div>
<div class="t" style="left:146.00px;top:45.98px;font-size:14.30px;font-weight:400;color:#1f1f1f;transform:scaleX(0.8609);">PAR</div>
<div class="t" style="left:184.60px;top:45.98px;font-size:14.30px;font-weight:400;color:#1f1f1f;transform:scaleX(0.8413);">CEN</div>
<div class="t" style="left:254.73px;top:45.98px;font-size:14.30px;font-weight:400;color:#1f1f1f;transform:scaleX(0.9600);">23</div>
<div class="t" style="left:284.60px;top:45.98px;font-size:14.30px;font-weight:400;color:#1f1f1f;transform:scaleX(0.9599);">PAR2/CEN/20/23</div>
<div class="t" style="left:421.00px;top:45.98px;font-size:14.30px;font-weight:400;color:#1f1f1f;transform:scaleX(0.9670);">2020.10.05</div>
<svg style="position:absolute;left:517.00px;top:43.58px;" width="19" height="20" viewBox="0 0 19 20"><rect x="2" y="1.5" width="15.5" height="17.8" fill="#fbfbfb"/><line x1="2.3" y1="1" x2="2.3" y2="19.7" stroke="#444" stroke-width="2"/><line x1="1.5" y1="1.7" x2="12.5" y2="1.7" stroke="#555" stroke-width="1.3"/><path d="M12.3,1.2 L17.8,6.8" stroke="#555" stroke-width="1.2"/><path d="M12.4,1.5 V6.5 H17.6" fill="none" stroke="#666" stroke-width="0.9"/><line x1="17.6" y1="6.5" x2="17.6" y2="19.7" stroke="#444" stroke-width="1.6"/><line x1="1.3" y1="19" x2="18.4" y2="19" stroke="#444" stroke-width="1.5"/><rect x="5" y="4.6" width="3" height="1.1" fill="#8a8a8a"/><rect x="5" y="7" width="8.5" height="1.1" fill="#8a8a8a"/><rect x="4.6" y="9.1" width="10.6" height="7.2" fill="#fff" stroke="#777" stroke-width="0.8"/><rect x="4.6" y="9.1" width="10.6" height="3.3" fill="#3a74c0"/><line x1="9.9" y1="9.1" x2="9.9" y2="16.3" stroke="#777" stroke-width="0.8"/></svg>
<div class="t" style="left:729.00px;top:45.98px;font-size:14.30px;font-weight:400;color:#1f1f1f;transform:scaleX(0.9689);">temp</div>
<div class="t" style="left:809.50px;top:45.98px;font-size:14.30px;font-weight:400;color:#1f1f1f;transform:scaleX(0.8794);">P.P.H.U."BASTA"</div>
<div class="t" style="left:978.50px;top:45.98px;font-size:14.30px;font-weight:400;color:#777;transform:scaleX(0.9500);">F</div>
<div style="position:absolute;left:0.00px;top:91.38px;width:981.00px;height:1.00px;background:#e9e8e6"></div>
<div style="position:absolute;left:10.00px;top:71.36px;width:15.00px;height:15.00px;border:1.2px solid #b8b8b8;background:#fff;box-sizing:border-box"></div>
<div style="position:absolute;left:71.30px;top:71.86px;width:14.50px;height:15.00px;border:1.2px solid #d2d0cd;border-top-color:#e2e1df;background:#fff;box-sizing:border-box"></div>
<svg style="position:absolute;left:71.00px;top:69.36px;" width="18" height="17" viewBox="0 0 18 17"><polyline points="3.9,9.8 7.6,13.5 15.3,4.6" fill="none" stroke="#0a86c0" stroke-width="3.3" stroke-linejoin="miter" stroke-linecap="square"/></svg>
<div class="t" style="left:115.53px;top:72.26px;font-size:14.30px;font-weight:400;color:#1f1f1f;transform:scaleX(0.9600);">22</div>
<div class="t" style="left:146.00px;top:72.26px;font-size:14.30px;font-weight:400;color:#1f1f1f;transform:scaleX(0.8609);">PAR</div>
<div class="t" style="left:184.60px;top:72.26px;font-size:14.30px;font-weight:400;color:#1f1f1f;transform:scaleX(0.8413);">CEN</div>
<div class="t" style="left:254.73px;top:72.26px;font-size:14.30px;font-weight:400;color:#1f1f1f;transform:scaleX(0.9600);">24</div>
<div class="t" style="left:284.60px;top:72.26px;font-size:14.30px;font-weight:400;color:#1f1f1f;transform:scaleX(0.9599);">PAR2/CEN/20/24</div>
<div class="t" style="left:421.00px;top:72.26px;font-size:14.30px;font-weight:400;color:#1f1f1f;transform:scaleX(0.9670);">2020.10.05</div>
<svg style="position:absolute;left:517.00px;top:69.86px;" width="19" height="20" viewBox="0 0 19 20"><rect x="2" y="1.5" width="15.5" height="17.8" fill="#fbfbfb"/><line x1="2.3" y1="1" x2="2.3" y2="19.7" stroke="#444" stroke-width="2"/><line x1="1.5" y1="1.7" x2="12.5" y2="1.7" stroke="#555" stroke-width="1.3"/><path d="M12.3,1.2 L17.8,6.8" stroke="#555" stroke-width="1.2"/><path d="M12.4,1.5 V6.5 H17.6" fill="none" stroke="#666" stroke-width="0.9"/><line x1="17.6" y1="6.5" x2="17.6" y2="19.7" stroke="#444" stroke-width="1.6"/><line x1="1.3" y1="19" x2="18.4" y2="19" stroke="#444" stroke-width="1.5"/><rect x="5" y="4.6" width="3" height="1.1" fill="#8a8a8a"/><rect x="5" y="7" width="8.5" height="1.1" fill="#8a8a8a"/><rect x="4.6" y="9.1" width="10.6" height="7.2" fill="#fff" stroke="#777" stroke-width="0.8"/><rect x="4.6" y="9.1" width="10.6" height="3.3" fill="#3a74c0"/><line x1="9.9" y1="9.1" x2="9.9" y2="16.3" stroke="#777" stroke-width="0.8"/></svg>
<div class="t" style="left:729.00px;top:72.26px;font-size:14.30px;font-weight:400;color:#1f1f1f;transform:scaleX(0.9689);">temp</div>
<div class="t" style="left:809.50px;top:72.26px;font-size:14.30px;font-weight:400;color:#1f1f1f;transform:scaleX(0.9552);">Topiel sp. z o.o.</div>
<div class="t" style="left:978.50px;top:72.26px;font-size:14.30px;font-weight:400;color:#777;transform:scaleX(0.9500);">F</div>
<div style="position:absolute;left:0.00px;top:117.66px;width:981.00px;height:1.00px;background:#e9e8e6"></div>
<div style="position:absolute;left:10.00px;top:97.64px;width:15.00px;height:15.00px;border:1.2px solid #b8b8b8;background:#fff;box-sizing:border-box"></div>
<div style="position:absolute;left:71.30px;top:98.14px;width:14.50px;height:15.00px;border:1.2px solid #d2d0cd;border-top-color:#e2e1df;background:#fff;box-sizing:border-box"></div>
<svg style="position:absolute;left:71.00px;top:95.64px;" width="18" height="17" viewBox="0 0 18 17"><polyline points="3.9,9.8 7.6,13.5 15.3,4.6" fill="none" stroke="#0a86c0" stroke-width="3.3" stroke-linejoin="miter" stroke-linecap="square"/></svg>
<div class="t" style="left:115.53px;top:98.54px;font-size:14.30px;font-weight:400;color:#1f1f1f;transform:scaleX(0.9600);">23</div>
<div class="t" style="left:146.00px;top:98.54px;font-size:14.30px;font-weight:400;color:#1f1f1f;transform:scaleX(0.8609);">PAR</div>
<div class="t" style="left:184.60px;top:98.54px;font-size:14.30px;font-weight:400;color:#1f1f1f;transform:scaleX(0.8413);">CEN</div>
<div class="t" style="left:254.73px;top:98.54px;font-size:14.30px;font-weight:400;color:#1f1f1f;transform:scaleX(0.9600);">25</div>
<div class="t" style="left:284.60px;top:98.54px;font-size:14.30px;font-weight:400;color:#1f1f1f;transform:scaleX(0.9599);">PAR2/CEN/20/25</div>
<div class="t" style="left:421.00px;top:98.54px;font-size:14.30px;font-weight:400;color:#1f1f1f;transform:scaleX(0.9670);">2020.10.05</div>
<svg style="position:absolute;left:517.00px;top:96.14px;" width="19" height="20" viewBox="0 0 19 20"><rect x="2" y="1.5" width="15.5" height="17.8" fill="#fbfbfb"/><line x1="2.3" y1="1" x2="2.3" y2="19.7" stroke="#444" stroke-width="2"/><line x1="1.5" y1="1.7" x2="12.5" y2="1.7" stroke="#555" stroke-width="1.3"/><path d="M12.3,1.2 L17.8,6.8" stroke="#555" stroke-width="1.2"/><path d="M12.4,1.5 V6.5 H17.6" fill="none" stroke="#666" stroke-width="0.9"/><line x1="17.6" y1="6.5" x2="17.6" y2="19.7" stroke="#444" stroke-width="1.6"/><line x1="1.3" y1="19" x2="18.4" y2="19" stroke="#444" stroke-width="1.5"/><rect x="5" y="4.6" width="3" height="1.1" fill="#8a8a8a"/><rect x="5" y="7" width="8.5" height="1.1" fill="#8a8a8a"/><rect x="4.6" y="9.1" width="10.6" height="7.2" fill="#fff" stroke="#777" stroke-width="0.8"/><rect x="4.6" y="9.1" width="10.6" height="3.3" fill="#3a74c0"/><line x1="9.9" y1="9.1" x2="9.9" y2="16.3" stroke="#777" stroke-width="0.8"/></svg>
<div class="t" style="left:729.00px;top:98.54px;font-size:14.30px;font-weight:400;color:#1f1f1f;transform:scaleX(0.9689);">temp</div>
<div style="position:absolute;left:0.00px;top:143.94px;width:981.00px;height:1.00px;background:#e9e8e6"></div>
<div style="position:absolute;left:10.00px;top:123.92px;width:15.00px;height:15.00px;border:1.2px solid #b8b8b8;background:#fff;box-sizing:border-box"></div>
<div style="position:absolute;left:71.30px;top:124.42px;width:14.50px;height:15.00px;border:1.2px solid #d2d0cd;border-top-color:#e2e1df;background:#fff;box-sizing:border-box"></div>
<svg style="position:absolute;left:71.00px;top:121.92px;" width="18" height="17" viewBox="0 0 18 17"><polyline points="3.9,9.8 7.6,13.5 15.3,4.6" fill="none" stroke="#0a86c0" stroke-width="3.3" stroke-linejoin="miter" stroke-linecap="square"/></svg>
<div class="t" style="left:115.53px;top:124.82px;font-size:14.30px;font-weight:400;color:#1f1f1f;transform:scaleX(0.9600);">24</div>
<div class="t" style="left:146.00px;top:124.82px;font-size:14.30px;font-weight:400;color:#1f1f1f;transform:scaleX(0.8609);">PAR</div>
<div class="t" style="left:184.60px;top:124.82px;font-size:14.30px;font-weight:400;color:#1f1f1f;transform:scaleX(0.8413);">CEN</div>
<div class="t" style="left:254.73px;top:124.82px;font-size:14.30px;font-weight:400;color:#1f1f1f;transform:scaleX(0.9600);">26</div>
<div class="t" style="left:284.60px;top:124.82px;font-size:14.30px;font-weight:400;color:#1f1f1f;transform:scaleX(0.9599);">PAR2/CEN/20/26</div>
<div class="t" style="left:421.00px;top:124.82px;font-size:14.30px;font-weight:400;color:#1f1f1f;transform:scaleX(0.9670);">2020.10.05</div>
<svg style="position:absolute;left:517.00px;top:122.42px;" width="19" height="20" viewBox="0 0 19 20"><rect x="2" y="1.5" width="15.5" height="17.8" fill="#fbfbfb"/><line x1="2.3" y1="1" x2="2.3" y2="19.7" stroke="#444" stroke-width="2"/><line x1="1.5" y1="1.7" x2="12.5" y2="1.7" stroke="#555" stroke-width="1.3"/><path d="M12.3,1.2 L17.8,6.8" stroke="#555" stroke-width="1.2"/><path d="M12.4,1.5 V6.5 H17.6" fill="none" stroke="#666" stroke-width="0.9"/><line x1="17.6" y1="6.5" x2="17.6" y2="19.7" stroke="#444" stroke-width="1.6"/><line x1="1.3" y1="19" x2="18.4" y2="19" stroke="#444" stroke-width="1.5"/><rect x="5" y="4.6" width="3" height="1.1" fill="#8a8a8a"/><rect x="5" y="7" width="8.5" height="1.1" fill="#8a8a8a"/><rect x="4.6" y="9.1" width="10.6" height="7.2" fill="#fff" stroke="#777" stroke-width="0.8"/><rect x="4.6" y="9.1" width="10.6" height="3.3" fill="#3a74c0"/><line x1="9.9" y1="9.1" x2="9.9" y2="16.3" stroke="#777" stroke-width="0.8"/></svg>
<div class="t" style="left:729.00px;top:124.82px;font-size:14.30px;font-weight:400;color:#1f1f1f;transform:scaleX(0.9689);">temp</div>
<div style="position:absolute;left:0.00px;top:170.22px;width:981.00px;height:1.00px;background:#e9e8e6"></div>
<div style="position:absolute;left:10.00px;top:150.20px;width:15.00px;height:15.00px;border:1.2px solid #b8b8b8;background:#fff;box-sizing:border-box"></div>
<div style="position:absolute;left:71.30px;top:150.70px;width:14.50px;height:15.00px;border:1.2px solid #d2d0cd;border-top-color:#e2e1df;background:#fff;box-sizing:border-box"></div>
<svg style="position:absolute;left:71.00px;top:148.20px;" width="18" height="17" viewBox="0 0 18 17"><polyline points="3.9,9.8 7.6,13.5 15.3,4.6" fill="none" stroke="#0a86c0" stroke-width="3.3" stroke-linejoin="miter" stroke-linecap="square"/></svg>
<div class="t" style="left:123.17px;top:151.10px;font-size:14.30px;font-weight:400;color:#1f1f1f;transform:scaleX(0.9600);">6</div>
<div class="t" style="left:146.00px;top:151.10px;font-size:14.30px;font-weight:400;color:#1f1f1f;transform:scaleX(0.8609);">PAR</div>
<div class="t" style="left:184.60px;top:151.10px;font-size:14.30px;font-weight:400;color:#1f1f1f;transform:scaleX(0.8413);">CEN</div>
<div class="t" style="left:254.73px;top:151.10px;font-size:14.30px;font-weight:400;color:#1f1f1f;transform:scaleX(0.9600);">27</div>
<div class="t" style="left:284.60px;top:151.10px;font-size:14.30px;font-weight:400;color:#1f1f1f;transform:scaleX(0.9599);">PAR2/CEN/20/27</div>
<div class="t" style="left:421.00px;top:151.10px;font-size:14.30px;font-weight:400;color:#1f1f1f;transform:scaleX(0.9670);">2020.10.05</div>
<svg style="position:absolute;left:517.00px;top:148.70px;" width="19" height="20" viewBox="0 0 19 20"><rect x="2" y="1.5" width="15.5" height="17.8" fill="#fbfbfb"/><line x1="2.3" y1="1" x2="2.3" y2="19.7" stroke="#444" stroke-width="2"/><line x1="1.5" y1="1.7" x2="12.5" y2="1.7" stroke="#555" stroke-width="1.3"/><path d="M12.3,1.2 L17.8,6.8" stroke="#555" stroke-width="1.2"/><path d="M12.4,1.5 V6.5 H17.6" fill="none" stroke="#666" stroke-width="0.9"/><line x1="17.6" y1="6.5" x2="17.6" y2="19.7" stroke="#444" stroke-width="1.6"/><line x1="1.3" y1="19" x2="18.4" y2="19" stroke="#444" stroke-width="1.5"/><rect x="5" y="4.6" width="3" height="1.1" fill="#8a8a8a"/><rect x="5" y="7" width="8.5" height="1.1" fill="#8a8a8a"/><rect x="4.6" y="9.1" width="10.6" height="7.2" fill="#fff" stroke="#777" stroke-width="0.8"/><rect x="4.6" y="9.1" width="10.6" height="3.3" fill="#3a74c0"/><line x1="9.9" y1="9.1" x2="9.9" y2="16.3" stroke="#777" stroke-width="0.8"/></svg>
<div class="t" style="left:729.00px;top:151.10px;font-size:14.30px;font-weight:400;color:#1f1f1f;transform:scaleX(0.9689);">temp</div>
<div style="position:absolute;left:0.00px;top:196.50px;width:981.00px;height:1.00px;background:#e9e8e6"></div>
<div style="position:absolute;left:10.00px;top:176.48px;width:15.00px;height:15.00px;border:1.2px solid #b8b8b8;background:#fff;box-sizing:border-box"></div>
<div style="position:absolute;left:71.30px;top:176.98px;width:14.50px;height:15.00px;border:1.2px solid #d2d0cd;border-top-color:#e2e1df;background:#fff;box-sizing:border-box"></div>
<svg style="position:absolute;left:71.00px;top:174.48px;" width="18" height="17" viewBox="0 0 18 17"><polyline points="3.9,9.8 7.6,13.5 15.3,4.6" fill="none" stroke="#0a86c0" stroke-width="3.3" stroke-linejoin="miter" stroke-linecap="square"/></svg>
<div class="t" style="left:115.53px;top:177.38px;font-size:14.30px;font-weight:400;color:#1f1f1f;transform:scaleX(0.9600);">25</div>
<div class="t" style="left:146.00px;top:177.38px;font-size:14.30px;font-weight:400;color:#1f1f1f;transform:scaleX(0.8609);">PAR</div>
<div class="t" style="left:184.60px;top:177.38px;font-size:14.30px;font-weight:400;color:#1f1f1f;transform:scaleX(0.8413);">CEN</div>
<div class="t" style="left:254.73px;top:177.38px;font-size:14.30px;font-weight:400;color:#1f1f1f;transform:scaleX(0.9600);">28</div>
<div class="t" style="left:284.60px;top:177.38px;font-size:14.30px;font-weight:400;color:#1f1f1f;transform:scaleX(0.9599);">PAR2/CEN/20/28</div>
<div class="t" style="left:421.00px;top:177.38px;font-size:14.30px;font-weight:400;color:#1f1f1f;transform:scaleX(0.9670);">2020.10.05</div>
<svg style="position:absolute;left:517.00px;top:174.98px;" width="19" height="20" viewBox="0 0 19 20"><rect x="2" y="1.5" width="15.5" height="17.8" fill="#fbfbfb"/><line x1="2.3" y1="1" x2="2.3" y2="19.7" stroke="#444" stroke-width="2"/><line x1="1.5" y1="1.7" x2="12.5" y2="1.7" stroke="#555" stroke-width="1.3"/><path d="M12.3,1.2 L17.8,6.8" stroke="#555" stroke-width="1.2"/><path d="M12.4,1.5 V6.5 H17.6" fill="none" stroke="#666" stroke-width="0.9"/><line x1="17.6" y1="6.5" x2="17.6" y2="19.7" stroke="#444" stroke-width="1.6"/><line x1="1.3" y1="19" x2="18.4" y2="19" stroke="#444" stroke-width="1.5"/><rect x="5" y="4.6" width="3" height="1.1" fill="#8a8a8a"/><rect x="5" y="7" width="8.5" height="1.1" fill="#8a8a8a"/><rect x="4.6" y="9.1" width="10.6" height="7.2" fill="#fff" stroke="#777" stroke-width="0.8"/><rect x="4.6" y="9.1" width="10.6" height="3.3" fill="#3a74c0"/><line x1="9.9" y1="9.1" x2="9.9" y2="16.3" stroke="#777" stroke-width="0.8"/></svg>
<div class="t" style="left:729.00px;top:177.38px;font-size:14.30px;font-weight:400;color:#1f1f1f;transform:scaleX(0.9689);">temp</div>
<div class="t" style="left:809.50px;top:177.38px;font-size:14.30px;font-weight:400;color:#1f1f1f;transform:scaleX(0.9435);">VitalGarden</div>
<div class="t" style="left:978.50px;top:177.38px;font-size:14.30px;font-weight:400;color:#777;transform:scaleX(0.9500);">F</div>
<div style="position:absolute;left:0.00px;top:222.78px;width:981.00px;height:1.00px;background:#e9e8e6"></div>
<div style="position:absolute;left:10.00px;top:202.76px;width:15.00px;height:15.00px;border:1.2px solid #b8b8b8;background:#fff;box-sizing:border-box"></div>
<div style="position:absolute;left:71.30px;top:203.26px;width:14.50px;height:15.00px;border:1.2px solid #d2d0cd;border-top-color:#e2e1df;background:#fff;box-sizing:border-box"></div>
<svg style="position:absolute;left:71.00px;top:200.76px;" width="18" height="17" viewBox="0 0 18 17"><polyline points="3.9,9.8 7.6,13.5 15.3,4.6" fill="none" stroke="#0a86c0" stroke-width="3.3" stroke-linejoin="miter" stroke-linecap="square"/></svg>
<div class="t" style="left:115.53px;top:203.66px;font-size:14.30px;font-weight:400;color:#1f1f1f;transform:scaleX(0.9600);">26</div>
<div class="t" style="left:146.00px;top:203.66px;font-size:14.30px;font-weight:400;color:#1f1f1f;transform:scaleX(0.8609);">PAR</div>
<div class="t" style="left:184.60px;top:203.66px;font-size:14.30px;font-weight:400;color:#1f1f1f;transform:scaleX(0.8413);">CEN</div>
<div class="t" style="left:254.73px;top:203.66px;font-size:14.30px;font-weight:400;color:#1f1f1f;transform:scaleX(0.9600);">29</div>
<div class="t" style="left:284.60px;top:203.66px;font-size:14.30px;font-weight:400;color:#1f1f1f;transform:scaleX(0.9599);">PAR2/CEN/20/29</div>
<div class="t" style="left:421.00px;top:203.66px;font-size:14.30px;font-weight:400;color:#1f1f1f;transform:scaleX(0.9670);">2020.10.05</div>
<svg style="position:absolute;left:517.00px;top:201.26px;" width="19" height="20" viewBox="0 0 19 20"><rect x="2" y="1.5" width="15.5" height="17.8" fill="#fbfbfb"/><line x1="2.3" y1="1" x2="2.3" y2="19.7" stroke="#444" stroke-width="2"/><line x1="1.5" y1="1.7" x2="12.5" y2="1.7" stroke="#555" stroke-width="1.3"/><path d="M12.3,1.2 L17.8,6.8" stroke="#555" stroke-width="1.2"/><path d="M12.4,1.5 V6.5 H17.6" fill="none" stroke="#666" stroke-width="0.9"/><line x1="17.6" y1="6.5" x2="17.6" y2="19.7" stroke="#444" stroke-width="1.6"/><line x1="1.3" y1="19" x2="18.4" y2="19" stroke="#444" stroke-width="1.5"/><rect x="5" y="4.6" width="3" height="1.1" fill="#8a8a8a"/><rect x="5" y="7" width="8.5" height="1.1" fill="#8a8a8a"/><rect x="4.6" y="9.1" width="10.6" height="7.2" fill="#fff" stroke="#777" stroke-width="0.8"/><rect x="4.6" y="9.1" width="10.6" height="3.3" fill="#3a74c0"/><line x1="9.9" y1="9.1" x2="9.9" y2="16.3" stroke="#777" stroke-width="0.8"/></svg>
<div class="t" style="left:729.00px;top:203.66px;font-size:14.30px;font-weight:400;color:#1f1f1f;transform:scaleX(0.9689);">temp</div>
<div style="position:absolute;left:0.00px;top:249.06px;width:981.00px;height:1.00px;background:#e9e8e6"></div>
<div style="position:absolute;left:10.00px;top:229.04px;width:15.00px;height:15.00px;border:1.2px solid #b8b8b8;background:#fff;box-sizing:border-box"></div>
<div style="position:absolute;left:71.30px;top:229.54px;width:14.50px;height:15.00px;border:1.2px solid #d2d0cd;border-top-color:#e2e1df;background:#fff;box-sizing:border-box"></div>
<svg style="position:absolute;left:71.00px;top:227.04px;" width="18" height="17" viewBox="0 0 18 17"><polyline points="3.9,9.8 7.6,13.5 15.3,4.6" fill="none" stroke="#0a86c0" stroke-width="3.3" stroke-linejoin="miter" stroke-linecap="square"/></svg>
<div class="t" style="left:115.53px;top:229.94px;font-size:14.30px;font-weight:400;color:#1f1f1f;transform:scaleX(0.9600);">27</div>
<div class="t" style="left:146.00px;top:229.94px;font-size:14.30px;font-weight:400;color:#1f1f1f;transform:scaleX(0.8609);">PAR</div>
<div class="t" style="left:184.60px;top:229.94px;font-size:14.30px;font-weight:400;color:#1f1f1f;transform:scaleX(0.8413);">CEN</div>
<div class="t" style="left:254.73px;top:229.94px;font-size:14.30px;font-weight:400;color:#1f1f1f;transform:scaleX(0.9600);">30</div>
<div class="t" style="left:284.60px;top:229.94px;font-size:14.30px;font-weight:400;color:#1f1f1f;transform:scaleX(0.9599);">PAR2/CEN/20/30</div>
<div class="t" style="left:421.00px;top:229.94px;font-size:14.30px;font-weight:400;color:#1f1f1f;transform:scaleX(0.9670);">2020.10.05</div>
<svg style="position:absolute;left:517.00px;top:227.54px;" width="19" height="20" viewBox="0 0 19 20"><rect x="2" y="1.5" width="15.5" height="17.8" fill="#fbfbfb"/><line x1="2.3" y1="1" x2="2.3" y2="19.7" stroke="#444" stroke-width="2"/><line x1="1.5" y1="1.7" x2="12.5" y2="1.7" stroke="#555" stroke-width="1.3"/><path d="M12.3,1.2 L17.8,6.8" stroke="#555" stroke-width="1.2"/><path d="M12.4,1.5 V6.5 H17.6" fill="none" stroke="#666" stroke-width="0.9"/><line x1="17.6" y1="6.5" x2="17.6" y2="19.7" stroke="#444" stroke-width="1.6"/><line x1="1.3" y1="19" x2="18.4" y2="19" stroke="#444" stroke-width="1.5"/><rect x="5" y="4.6" width="3" height="1.1" fill="#8a8a8a"/><rect x="5" y="7" width="8.5" height="1.1" fill="#8a8a8a"/><rect x="4.6" y="9.1" width="10.6" height="7.2" fill="#fff" stroke="#777" stroke-width="0.8"/><rect x="4.6" y="9.1" width="10.6" height="3.3" fill="#3a74c0"/><line x1="9.9" y1="9.1" x2="9.9" y2="16.3" stroke="#777" stroke-width="0.8"/></svg>
<div class="t" style="left:729.00px;top:229.94px;font-size:14.30px;font-weight:400;color:#1f1f1f;transform:scaleX(0.9689);">temp</div>
<div style="position:absolute;left:0.00px;top:275.34px;width:981.00px;height:1.00px;background:#e9e8e6"></div>
<div style="position:absolute;left:10.00px;top:255.32px;width:15.00px;height:15.00px;border:1.2px solid #b8b8b8;background:#fff;box-sizing:border-box"></div>
<div style="position:absolute;left:71.30px;top:255.82px;width:14.50px;height:15.00px;border:1.2px solid #d2d0cd;border-top-color:#e2e1df;background:#fff;box-sizing:border-box"></div>
<svg style="position:absolute;left:71.00px;top:253.32px;" width="18" height="17" viewBox="0 0 18 17"><polyline points="3.9,9.8 7.6,13.5 15.3,4.6" fill="none" stroke="#0a86c0" stroke-width="3.3" stroke-linejoin="miter" stroke-linecap="square"/></svg>
<div class="t" style="left:115.53px;top:256.22px;font-size:14.30px;font-weight:400;color:#1f1f1f;transform:scaleX(0.9600);">28</div>
<div class="t" style="left:146.00px;top:256.22px;font-size:14.30px;font-weight:400;color:#1f1f1f;transform:scaleX(0.8609);">PAR</div>
<div class="t" style="left:184.60px;top:256.22px;font-size:14.30px;font-weight:400;color:#1f1f1f;transform:scaleX(0.8413);">CEN</div>
<div class="t" style="left:254.73px;top:256.22px;font-size:14.30px;font-weight:400;color:#1f1f1f;transform:scaleX(0.9600);">31</div>
<div class="t" style="left:284.60px;top:256.22px;font-size:14.30px;font-weight:400;color:#1f1f1f;transform:scaleX(0.9599);">PAR2/CEN/20/31</div>
<div class="t" style="left:421.00px;top:256.22px;font-size:14.30px;font-weight:400;color:#1f1f1f;transform:scaleX(0.9670);">2020.10.05</div>
<svg style="position:absolute;left:517.00px;top:253.82px;" width="19" height="20" viewBox="0 0 19 20"><rect x="2" y="1.5" width="15.5" height="17.8" fill="#fbfbfb"/><line x1="2.3" y1="1" x2="2.3" y2="19.7" stroke="#444" stroke-width="2"/><line x1="1.5" y1="1.7" x2="12.5" y2="1.7" stroke="#555" stroke-width="1.3"/><path d="M12.3,1.2 L17.8,6.8" stroke="#555" stroke-width="1.2"/><path d="M12.4,1.5 V6.5 H17.6" fill="none" stroke="#666" stroke-width="0.9"/><line x1="17.6" y1="6.5" x2="17.6" y2="19.7" stroke="#444" stroke-width="1.6"/><line x1="1.3" y1="19" x2="18.4" y2="19" stroke="#444" stroke-width="1.5"/><rect x="5" y="4.6" width="3" height="1.1" fill="#8a8a8a"/><rect x="5" y="7" width="8.5" height="1.1" fill="#8a8a8a"/><rect x="4.6" y="9.1" width="10.6" height="7.2" fill="#fff" stroke="#777" stroke-width="0.8"/><rect x="4.6" y="9.1" width="10.6" height="3.3" fill="#3a74c0"/><line x1="9.9" y1="9.1" x2="9.9" y2="16.3" stroke="#777" stroke-width="0.8"/></svg>
<div class="t" style="left:729.00px;top:256.22px;font-size:14.30px;font-weight:400;color:#1f1f1f;transform:scaleX(0.9689);">temp</div>
<div class="t" style="left:809.50px;top:256.22px;font-size:14.30px;font-weight:400;color:#1f1f1f;transform:scaleX(0.9435);">VitalGarden</div>
<div class="t" style="left:978.50px;top:256.22px;font-size:14.30px;font-weight:400;color:#777;transform:scaleX(0.9500);">F</div>
<div style="position:absolute;left:0.00px;top:301.62px;width:981.00px;height:1.00px;background:#e9e8e6"></div>
<div style="position:absolute;left:10.00px;top:281.60px;width:15.00px;height:15.00px;border:1.2px solid #b8b8b8;background:#fff;box-sizing:border-box"></div>
<div style="position:absolute;left:71.30px;top:282.10px;width:14.50px;height:15.00px;border:1.2px solid #d2d0cd;border-top-color:#e2e1df;background:#fff;box-sizing:border-box"></div>
<svg style="position:absolute;left:71.00px;top:279.60px;" width="18" height="17" viewBox="0 0 18 17"><polyline points="3.9,9.8 7.6,13.5 15.3,4.6" fill="none" stroke="#0a86c0" stroke-width="3.3" stroke-linejoin="miter" stroke-linecap="square"/></svg>
<div class="t" style="left:115.53px;top:282.50px;font-size:14.30px;font-weight:400;color:#1f1f1f;transform:scaleX(0.9600);">29</div>
<div class="t" style="left:146.00px;top:282.50px;font-size:14.30px;font-weight:400;color:#1f1f1f;transform:scaleX(0.8609);">PAR</div>
<div class="t" style="left:184.60px;top:282.50px;font-size:14.30px;font-weight:400;color:#1f1f1f;transform:scaleX(0.8413);">CEN</div>
<div class="t" style="left:254.73px;top:282.50px;font-size:14.30px;font-weight:400;color:#1f1f1f;transform:scaleX(0.9600);">32</div>
<div class="t" style="left:284.60px;top:282.50px;font-size:14.30px;font-weight:400;color:#1f1f1f;transform:scaleX(0.9599);">PAR2/CEN/20/32</div>
<div class="t" style="left:421.00px;top:282.50px;font-size:14.30px;font-weight:400;color:#1f1f1f;transform:scaleX(0.9670);">2020.10.05</div>
<svg style="position:absolute;left:517.00px;top:280.10px;" width="19" height="20" viewBox="0 0 19 20"><rect x="2" y="1.5" width="15.5" height="17.8" fill="#fbfbfb"/><line x1="2.3" y1="1" x2="2.3" y2="19.7" stroke="#444" stroke-width="2"/><line x1="1.5" y1="1.7" x2="12.5" y2="1.7" stroke="#555" stroke-width="1.3"/><path d="M12.3,1.2 L17.8,6.8" stroke="#555" stroke-width="1.2"/><path d="M12.4,1.5 V6.5 H17.6" fill="none" stroke="#666" stroke-width="0.9"/><line x1="17.6" y1="6.5" x2="17.6" y2="19.7" stroke="#444" stroke-width="1.6"/><line x1="1.3" y1="19" x2="18.4" y2="19" stroke="#444" stroke-width="1.5"/><rect x="5" y="4.6" width="3" height="1.1" fill="#8a8a8a"/><rect x="5" y="7" width="8.5" height="1.1" fill="#8a8a8a"/><rect x="4.6" y="9.1" width="10.6" height="7.2" fill="#fff" stroke="#777" stroke-width="0.8"/><rect x="4.6" y="9.1" width="10.6" height="3.3" fill="#3a74c0"/><line x1="9.9" y1="9.1" x2="9.9" y2="16.3" stroke="#777" stroke-width="0.8"/></svg>
<div class="t" style="left:729.00px;top:282.50px;font-size:14.30px;font-weight:400;color:#1f1f1f;transform:scaleX(0.9689);">temp</div>
<div style="position:absolute;left:0.00px;top:327.90px;width:981.00px;height:1.00px;background:#e9e8e6"></div>
<div style="position:absolute;left:10.00px;top:307.88px;width:15.00px;height:15.00px;border:1.2px solid #b8b8b8;background:#fff;box-sizing:border-box"></div>
<div style="position:absolute;left:71.30px;top:308.38px;width:14.50px;height:15.00px;border:1.2px solid #d2d0cd;border-top-color:#e2e1df;background:#fff;box-sizing:border-box"></div>
<svg style="position:absolute;left:71.00px;top:305.88px;" width="18" height="17" viewBox="0 0 18 17"><polyline points="3.9,9.8 7.6,13.5 15.3,4.6" fill="none" stroke="#0a86c0" stroke-width="3.3" stroke-linejoin="miter" stroke-linecap="square"/></svg>
<div class="t" style="left:115.53px;top:308.78px;font-size:14.30px;font-weight:400;color:#1f1f1f;transform:scaleX(0.9600);">30</div>
<div class="t" style="left:146.00px;top:308.78px;font-size:14.30px;font-weight:400;color:#1f1f1f;transform:scaleX(0.8609);">PAR</div>
<div class="t" style="left:184.60px;top:308.78px;font-size:14.30px;font-weight:400;color:#1f1f1f;transform:scaleX(0.8413);">CEN</div>
<div class="t" style="left:254.73px;top:308.78px;font-size:14.30px;font-weight:400;color:#1f1f1f;transform:scaleX(0.9600);">33</div>
<div class="t" style="left:284.60px;top:308.78px;font-size:14.30px;font-weight:400;color:#1f1f1f;transform:scaleX(0.9599);">PAR2/CEN/20/33</div>
<div class="t" style="left:421.00px;top:308.78px;font-size:14.30px;font-weight:400;color:#1f1f1f;transform:scaleX(0.9670);">2020.10.05</div>
<svg style="position:absolute;left:517.00px;top:306.38px;" width="19" height="20" viewBox="0 0 19 20"><rect x="2" y="1.5" width="15.5" height="17.8" fill="#fbfbfb"/><line x1="2.3" y1="1" x2="2.3" y2="19.7" stroke="#444" stroke-width="2"/><line x1="1.5" y1="1.7" x2="12.5" y2="1.7" stroke="#555" stroke-width="1.3"/><path d="M12.3,1.2 L17.8,6.8" stroke="#555" stroke-width="1.2"/><path d="M12.4,1.5 V6.5 H17.6" fill="none" stroke="#666" stroke-width="0.9"/><line x1="17.6" y1="6.5" x2="17.6" y2="19.7" stroke="#444" stroke-width="1.6"/><line x1="1.3" y1="19" x2="18.4" y2="19" stroke="#444" stroke-width="1.5"/><rect x="5" y="4.6" width="3" height="1.1" fill="#8a8a8a"/><rect x="5" y="7" width="8.5" height="1.1" fill="#8a8a8a"/><rect x="4.6" y="9.1" width="10.6" height="7.2" fill="#fff" stroke="#777" stroke-width="0.8"/><rect x="4.6" y="9.1" width="10.6" height="3.3" fill="#3a74c0"/><line x1="9.9" y1="9.1" x2="9.9" y2="16.3" stroke="#777" stroke-width="0.8"/></svg>
<div class="t" style="left:729.00px;top:308.78px;font-size:14.30px;font-weight:400;color:#1f1f1f;transform:scaleX(0.9689);">temp</div>
<div style="position:absolute;left:0.00px;top:354.18px;width:981.00px;height:1.00px;background:#e9e8e6"></div>
<div style="position:absolute;left:10.00px;top:334.16px;width:15.00px;height:15.00px;border:1.2px solid #b8b8b8;background:#fff;box-sizing:border-box"></div>
<div style="position:absolute;left:71.30px;top:334.66px;width:14.50px;height:15.00px;border:1.2px solid #d2d0cd;border-top-color:#e2e1df;background:#fff;box-sizing:border-box"></div>
<svg style="position:absolute;left:71.00px;top:332.16px;" width="18" height="17" viewBox="0 0 18 17"><polyline points="3.9,9.8 7.6,13.5 15.3,4.6" fill="none" stroke="#0a86c0" stroke-width="3.3" stroke-linejoin="miter" stroke-linecap="square"/></svg>
<div class="t" style="left:115.53px;top:335.06px;font-size:14.30px;font-weight:400;color:#1f1f1f;transform:scaleX(0.9600);">31</div>
<div class="t" style="left:146.00px;top:335.06px;font-size:14.30px;font-weight:400;color:#1f1f1f;transform:scaleX(0.8609);">PAR</div>
<div class="t" style="left:184.60px;top:335.06px;font-size:14.30px;font-weight:400;color:#1f1f1f;transform:scaleX(0.8413);">CEN</div>
<div class="t" style="left:254.73px;top:335.06px;font-size:14.30px;font-weight:400;color:#1f1f1f;transform:scaleX(0.9600);">34</div>
<div class="t" style="left:284.60px;top:335.06px;font-size:14.30px;font-weight:400;color:#1f1f1f;transform:scaleX(0.9599);">PAR2/CEN/20/34</div>
<div class="t" style="left:421.00px;top:335.06px;font-size:14.30px;font-weight:400;color:#1f1f1f;transform:scaleX(0.9670);">2020.10.05</div>
<svg style="position:absolute;left:517.00px;top:332.66px;" width="19" height="20" viewBox="0 0 19 20"><rect x="2" y="1.5" width="15.5" height="17.8" fill="#fbfbfb"/><line x1="2.3" y1="1" x2="2.3" y2="19.7" stroke="#444" stroke-width="2"/><line x1="1.5" y1="1.7" x2="12.5" y2="1.7" stroke="#555" stroke-width="1.3"/><path d="M12.3,1.2 L17.8,6.8" stroke="#555" stroke-width="1.2"/><path d="M12.4,1.5 V6.5 H17.6" fill="none" stroke="#666" stroke-width="0.9"/><line x1="17.6" y1="6.5" x2="17.6" y2="19.7" stroke="#444" stroke-width="1.6"/><line x1="1.3" y1="19" x2="18.4" y2="19" stroke="#444" stroke-width="1.5"/><rect x="5" y="4.6" width="3" height="1.1" fill="#8a8a8a"/><rect x="5" y="7" width="8.5" height="1.1" fill="#8a8a8a"/><rect x="4.6" y="9.1" width="10.6" height="7.2" fill="#fff" stroke="#777" stroke-width="0.8"/><rect x="4.6" y="9.1" width="10.6" height="3.3" fill="#3a74c0"/><line x1="9.9" y1="9.1" x2="9.9" y2="16.3" stroke="#777" stroke-width="0.8"/></svg>
<div class="t" style="left:729.00px;top:335.06px;font-size:14.30px;font-weight:400;color:#1f1f1f;transform:scaleX(0.9689);">temp</div>
<div style="position:absolute;left:0.00px;top:380.46px;width:981.00px;height:1.00px;background:#e9e8e6"></div>
<div style="position:absolute;left:10.00px;top:360.44px;width:15.00px;height:15.00px;border:1.2px solid #b8b8b8;background:#fff;box-sizing:border-box"></div>
<div style="position:absolute;left:71.30px;top:360.94px;width:14.50px;height:15.00px;border:1.2px solid #d2d0cd;border-top-color:#e2e1df;background:#fff;box-sizing:border-box"></div>
<svg style="position:absolute;left:71.00px;top:358.44px;" width="18" height="17" viewBox="0 0 18 17"><polyline points="3.9,9.8 7.6,13.5 15.3,4.6" fill="none" stroke="#0a86c0" stroke-width="3.3" stroke-linejoin="miter" stroke-linecap="square"/></svg>
<div class="t" style="left:115.53px;top:361.34px;font-size:14.30px;font-weight:400;color:#1f1f1f;transform:scaleX(0.9600);">32</div>
<div class="t" style="left:146.00px;top:361.34px;font-size:14.30px;font-weight:400;color:#1f1f1f;transform:scaleX(0.8609);">PAR</div>
<div class="t" style="left:184.60px;top:361.34px;font-size:14.30px;font-weight:400;color:#1f1f1f;transform:scaleX(0.8413);">CEN</div>
<div class="t" style="left:254.73px;top:361.34px;font-size:14.30px;font-weight:400;color:#1f1f1f;transform:scaleX(0.9600);">35</div>
<div class="t" style="left:284.60px;top:361.34px;font-size:14.30px;font-weight:400;color:#1f1f1f;transform:scaleX(0.9599);">PAR2/CEN/20/35</div>
<div class="t" style="left:421.00px;top:361.34px;font-size:14.30px;font-weight:400;color:#1f1f1f;transform:scaleX(0.9670);">2020.10.05</div>
<svg style="position:absolute;left:517.00px;top:358.94px;" width="19" height="20" viewBox="0 0 19 20"><rect x="2" y="1.5" width="15.5" height="17.8" fill="#fbfbfb"/><line x1="2.3" y1="1" x2="2.3" y2="19.7" stroke="#444" stroke-width="2"/><line x1="1.5" y1="1.7" x2="12.5" y2="1.7" stroke="#555" stroke-width="1.3"/><path d="M12.3,1.2 L17.8,6.8" stroke="#555" stroke-width="1.2"/><path d="M12.4,1.5 V6.5 H17.6" fill="none" stroke="#666" stroke-width="0.9"/><line x1="17.6" y1="6.5" x2="17.6" y2="19.7" stroke="#444" stroke-width="1.6"/><line x1="1.3" y1="19" x2="18.4" y2="19" stroke="#444" stroke-width="1.5"/><rect x="5" y="4.6" width="3" height="1.1" fill="#8a8a8a"/><rect x="5" y="7" width="8.5" height="1.1" fill="#8a8a8a"/><rect x="4.6" y="9.1" width="10.6" height="7.2" fill="#fff" stroke="#777" stroke-width="0.8"/><rect x="4.6" y="9.1" width="10.6" height="3.3" fill="#3a74c0"/><line x1="9.9" y1="9.1" x2="9.9" y2="16.3" stroke="#777" stroke-width="0.8"/></svg>
<div class="t" style="left:729.00px;top:361.34px;font-size:14.30px;font-weight:400;color:#1f1f1f;transform:scaleX(0.9689);">temp</div>
<div class="t" style="left:809.50px;top:361.34px;font-size:14.30px;font-weight:400;color:#1f1f1f;transform:scaleX(0.9582);">Lidmar s.c.</div>
<div class="t" style="left:978.50px;top:361.34px;font-size:14.30px;font-weight:400;color:#777;transform:scaleX(0.9500);">F</div>
<div style="position:absolute;left:0.00px;top:406.74px;width:981.00px;height:1.00px;background:#e9e8e6"></div>
<div style="position:absolute;left:10.00px;top:386.72px;width:15.00px;height:15.00px;border:1.2px solid #b8b8b8;background:#fff;box-sizing:border-box"></div>
<div style="position:absolute;left:71.30px;top:387.22px;width:14.50px;height:15.00px;border:1.2px solid #d2d0cd;border-top-color:#e2e1df;background:#fff;box-sizing:border-box"></div>
<svg style="position:absolute;left:71.00px;top:384.72px;" width="18" height="17" viewBox="0 0 18 17"><polyline points="3.9,9.8 7.6,13.5 15.3,4.6" fill="none" stroke="#0a86c0" stroke-width="3.3" stroke-linejoin="miter" stroke-linecap="square"/></svg>
<div class="t" style="left:123.17px;top:387.62px;font-size:14.30px;font-weight:400;color:#1f1f1f;transform:scaleX(0.9600);">7</div>
<div class="t" style="left:146.00px;top:387.62px;font-size:14.30px;font-weight:400;color:#1f1f1f;transform:scaleX(0.8609);">PAR</div>
<div class="t" style="left:184.60px;top:387.62px;font-size:14.30px;font-weight:400;color:#1f1f1f;transform:scaleX(0.8413);">CEN</div>
<div class="t" style="left:254.73px;top:387.62px;font-size:14.30px;font-weight:400;color:#1f1f1f;transform:scaleX(0.9600);">36</div>
<div class="t" style="left:284.60px;top:387.62px;font-size:14.30px;font-weight:400;color:#1f1f1f;transform:scaleX(0.9599);">PAR2/CEN/20/36</div>
<div class="t" style="left:421.00px;top:387.62px;font-size:14.30px;font-weight:400;color:#1f1f1f;transform:scaleX(0.9670);">2020.10.05</div>
<svg style="position:absolute;left:517.00px;top:385.22px;" width="19" height="20" viewBox="0 0 19 20"><rect x="2" y="1.5" width="15.5" height="17.8" fill="#fbfbfb"/><line x1="2.3" y1="1" x2="2.3" y2="19.7" stroke="#444" stroke-width="2"/><line x1="1.5" y1="1.7" x2="12.5" y2="1.7" stroke="#555" stroke-width="1.3"/><path d="M12.3,1.2 L17.8,6.8" stroke="#555" stroke-width="1.2"/><path d="M12.4,1.5 V6.5 H17.6" fill="none" stroke="#666" stroke-width="0.9"/><line x1="17.6" y1="6.5" x2="17.6" y2="19.7" stroke="#444" stroke-width="1.6"/><line x1="1.3" y1="19" x2="18.4" y2="19" stroke="#444" stroke-width="1.5"/><rect x="5" y="4.6" width="3" height="1.1" fill="#8a8a8a"/><rect x="5" y="7" width="8.5" height="1.1" fill="#8a8a8a"/><rect x="4.6" y="9.1" width="10.6" height="7.2" fill="#fff" stroke="#777" stroke-width="0.8"/><rect x="4.6" y="9.1" width="10.6" height="3.3" fill="#3a74c0"/><line x1="9.9" y1="9.1" x2="9.9" y2="16.3" stroke="#777" stroke-width="0.8"/></svg>
<div class="t" style="left:729.00px;top:387.62px;font-size:14.30px;font-weight:400;color:#1f1f1f;transform:scaleX(0.9689);">temp</div>
<div style="position:absolute;left:0.00px;top:433.02px;width:981.00px;height:1.00px;background:#e9e8e6"></div>
<div style="position:absolute;left:10.00px;top:413.00px;width:15.00px;height:15.00px;border:1.2px solid #b8b8b8;background:#fff;box-sizing:border-box"></div>
<div style="position:absolute;left:71.30px;top:413.50px;width:14.50px;height:15.00px;border:1.2px solid #d2d0cd;border-top-color:#e2e1df;background:#fff;box-sizing:border-box"></div>
<svg style="position:absolute;left:71.00px;top:411.00px;" width="18" height="17" viewBox="0 0 18 17"><polyline points="3.9,9.8 7.6,13.5 15.3,4.6" fill="none" stroke="#0a86c0" stroke-width="3.3" stroke-linejoin="miter" stroke-linecap="square"/></svg>
<div class="t" style="left:115.53px;top:413.90px;font-size:14.30px;font-weight:400;color:#1f1f1f;transform:scaleX(0.9600);">33</div>
<div class="t" style="left:146.00px;top:413.90px;font-size:14.30px;font-weight:400;color:#1f1f1f;transform:scaleX(0.8609);">PAR</div>
<div class="t" style="left:184.60px;top:413.90px;font-size:14.30px;font-weight:400;color:#1f1f1f;transform:scaleX(0.8413);">CEN</div>
<div class="t" style="left:254.73px;top:413.90px;font-size:14.30px;font-weight:400;color:#1f1f1f;transform:scaleX(0.9600);">37</div>
<div class="t" style="left:284.60px;top:413.90px;font-size:14.30px;font-weight:400;color:#1f1f1f;transform:scaleX(0.9599);">PAR2/CEN/20/37</div>
<div class="t" style="left:421.00px;top:413.90px;font-size:14.30px;font-weight:400;color:#1f1f1f;transform:scaleX(0.9670);">2020.10.05</div>
<svg style="position:absolute;left:517.00px;top:411.50px;" width="19" height="20" viewBox="0 0 19 20"><rect x="2" y="1.5" width="15.5" height="17.8" fill="#fbfbfb"/><line x1="2.3" y1="1" x2="2.3" y2="19.7" stroke="#444" stroke-width="2"/><line x1="1.5" y1="1.7" x2="12.5" y2="1.7" stroke="#555" stroke-width="1.3"/><path d="M12.3,1.2 L17.8,6.8" stroke="#555" stroke-width="1.2"/><path d="M12.4,1.5 V6.5 H17.6" fill="none" stroke="#666" stroke-width="0.9"/><line x1="17.6" y1="6.5" x2="17.6" y2="19.7" stroke="#444" stroke-width="1.6"/><line x1="1.3" y1="19" x2="18.4" y2="19" stroke="#444" stroke-width="1.5"/><rect x="5" y="4.6" width="3" height="1.1" fill="#8a8a8a"/><rect x="5" y="7" width="8.5" height="1.1" fill="#8a8a8a"/><rect x="4.6" y="9.1" width="10.6" height="7.2" fill="#fff" stroke="#777" stroke-width="0.8"/><rect x="4.6" y="9.1" width="10.6" height="3.3" fill="#3a74c0"/><line x1="9.9" y1="9.1" x2="9.9" y2="16.3" stroke="#777" stroke-width="0.8"/></svg>
<div class="t" style="left:729.00px;top:413.90px;font-size:14.30px;font-weight:400;color:#1f1f1f;transform:scaleX(0.9689);">temp</div>
<div class="t" style="left:809.50px;top:413.90px;font-size:14.30px;font-weight:400;color:#1f1f1f;transform:scaleX(0.8809);">UNIFIED ASPECTS</div>
<div class="t" style="left:978.50px;top:413.90px;font-size:14.30px;font-weight:400;color:#777;transform:scaleX(0.9500);">F</div>
<div style="position:absolute;left:0.00px;top:459.30px;width:981.00px;height:1.00px;background:#e9e8e6"></div>
<div style="position:absolute;left:10.00px;top:439.28px;width:15.00px;height:15.00px;border:1.2px solid #b8b8b8;background:#fff;box-sizing:border-box"></div>
<div style="position:absolute;left:71.30px;top:439.78px;width:14.50px;height:15.00px;border:1.2px solid #d2d0cd;border-top-color:#e2e1df;background:#fff;box-sizing:border-box"></div>
<svg style="position:absolute;left:71.00px;top:437.28px;" width="18" height="17" viewBox="0 0 18 17"><polyline points="3.9,9.8 7.6,13.5 15.3,4.6" fill="none" stroke="#0a86c0" stroke-width="3.3" stroke-linejoin="miter" stroke-linecap="square"/></svg>
<div class="t" style="left:115.53px;top:440.18px;font-size:14.30px;font-weight:400;color:#1f1f1f;transform:scaleX(0.9600);">34</div>
<div class="t" style="left:146.00px;top:440.18px;font-size:14.30px;font-weight:400;color:#1f1f1f;transform:scaleX(0.8609);">PAR</div>
<div class="t" style="left:184.60px;top:440.18px;font-size:14.30px;font-weight:400;color:#1f1f1f;transform:scaleX(0.8413);">CEN</div>
<div class="t" style="left:254.73px;top:440.18px;font-size:14.30px;font-weight:400;color:#1f1f1f;transform:scaleX(0.9600);">38</div>
<div class="t" style="left:284.60px;top:440.18px;font-size:14.30px;font-weight:400;color:#1f1f1f;transform:scaleX(0.9599);">PAR2/CEN/20/38</div>
<div class="t" style="left:421.00px;top:440.18px;font-size:14.30px;font-weight:400;color:#1f1f1f;transform:scaleX(0.9670);">2020.10.05</div>
<svg style="position:absolute;left:517.00px;top:437.78px;" width="19" height="20" viewBox="0 0 19 20"><rect x="2" y="1.5" width="15.5" height="17.8" fill="#fbfbfb"/><line x1="2.3" y1="1" x2="2.3" y2="19.7" stroke="#444" stroke-width="2"/><line x1="1.5" y1="1.7" x2="12.5" y2="1.7" stroke="#555" stroke-width="1.3"/><path d="M12.3,1.2 L17.8,6.8" stroke="#555" stroke-width="1.2"/><path d="M12.4,1.5 V6.5 H17.6" fill="none" stroke="#666" stroke-width="0.9"/><line x1="17.6" y1="6.5" x2="17.6" y2="19.7" stroke="#444" stroke-width="1.6"/><line x1="1.3" y1="19" x2="18.4" y2="19" stroke="#444" stroke-width="1.5"/><rect x="5" y="4.6" width="3" height="1.1" fill="#8a8a8a"/><rect x="5" y="7" width="8.5" height="1.1" fill="#8a8a8a"/><rect x="4.6" y="9.1" width="10.6" height="7.2" fill="#fff" stroke="#777" stroke-width="0.8"/><rect x="4.6" y="9.1" width="10.6" height="3.3" fill="#3a74c0"/><line x1="9.9" y1="9.1" x2="9.9" y2="16.3" stroke="#777" stroke-width="0.8"/></svg>
<div class="t" style="left:729.00px;top:440.18px;font-size:14.30px;font-weight:400;color:#1f1f1f;transform:scaleX(0.9689);">temp</div>
<div style="position:absolute;left:0.00px;top:485.58px;width:981.00px;height:1.00px;background:#e9e8e6"></div>
<div style="position:absolute;left:10.00px;top:465.56px;width:15.00px;height:15.00px;border:1.2px solid #b8b8b8;background:#fff;box-sizing:border-box"></div>
<div style="position:absolute;left:71.30px;top:466.06px;width:14.50px;height:15.00px;border:1.2px solid #d2d0cd;border-top-color:#e2e1df;background:#fff;box-sizing:border-box"></div>
<svg style="position:absolute;left:71.00px;top:463.56px;" width="18" height="17" viewBox="0 0 18 17"><polyline points="3.9,9.8 7.6,13.5 15.3,4.6" fill="none" stroke="#0a86c0" stroke-width="3.3" stroke-linejoin="miter" stroke-linecap="square"/></svg>
<div class="t" style="left:115.53px;top:466.46px;font-size:14.30px;font-weight:400;color:#1f1f1f;transform:scaleX(0.9600);">35</div>
<div class="t" style="left:146.00px;top:466.46px;font-size:14.30px;font-weight:400;color:#1f1f1f;transform:scaleX(0.8609);">PAR</div>
<div class="t" style="left:184.60px;top:466.46px;font-size:14.30px;font-weight:400;color:#1f1f1f;transform:scaleX(0.8413);">CEN</div>
<div class="t" style="left:254.73px;top:466.46px;font-size:14.30px;font-weight:400;color:#1f1f1f;transform:scaleX(0.9600);">39</div>
<div class="t" style="left:284.60px;top:466.46px;font-size:14.30px;font-weight:400;color:#1f1f1f;transform:scaleX(0.9599);">PAR2/CEN/20/39</div>
<div class="t" style="left:421.00px;top:466.46px;font-size:14.30px;font-weight:400;color:#1f1f1f;transform:scaleX(0.9670);">2020.10.05</div>
<svg style="position:absolute;left:517.00px;top:464.06px;" width="19" height="20" viewBox="0 0 19 20"><rect x="2" y="1.5" width="15.5" height="17.8" fill="#fbfbfb"/><line x1="2.3" y1="1" x2="2.3" y2="19.7" stroke="#444" stroke-width="2"/><line x1="1.5" y1="1.7" x2="12.5" y2="1.7" stroke="#555" stroke-width="1.3"/><path d="M12.3,1.2 L17.8,6.8" stroke="#555" stroke-width="1.2"/><path d="M12.4,1.5 V6.5 H17.6" fill="none" stroke="#666" stroke-width="0.9"/><line x1="17.6" y1="6.5" x2="17.6" y2="19.7" stroke="#444" stroke-width="1.6"/><line x1="1.3" y1="19" x2="18.4" y2="19" stroke="#444" stroke-width="1.5"/><rect x="5" y="4.6" width="3" height="1.1" fill="#8a8a8a"/><rect x="5" y="7" width="8.5" height="1.1" fill="#8a8a8a"/><rect x="4.6" y="9.1" width="10.6" height="7.2" fill="#fff" stroke="#777" stroke-width="0.8"/><rect x="4.6" y="9.1" width="10.6" height="3.3" fill="#3a74c0"/><line x1="9.9" y1="9.1" x2="9.9" y2="16.3" stroke="#777" stroke-width="0.8"/></svg>
<div class="t" style="left:729.00px;top:466.46px;font-size:14.30px;font-weight:400;color:#1f1f1f;transform:scaleX(0.9689);">temp</div>
</div>
<div style="position:absolute;left:982.00px;top:189.00px;width:16.60px;height:531.00px;background:#fdfdfd"></div>
<div style="position:absolute;left:982.00px;top:189.00px;width:1.00px;height:531.00px;background:#e4e2df"></div>
<div style="position:absolute;left:983.00px;top:189.00px;width:15.60px;height:49.00px;background:#f8f7f6"></div>
<div style="position:absolute;left:982.00px;top:237.00px;width:16.60px;height:1.00px;background:#e4e2df"></div>
<svg style="position:absolute;left:984.00px;top:206.00px;" width="12" height="14" viewBox="0 0 12 14"><polyline points="9.5,1.5 3.5,7 9.5,12.5" fill="none" stroke="#999" stroke-width="1.2"/></svg>
<svg style="position:absolute;left:984.00px;top:240.00px;" width="12" height="10" viewBox="0 0 12 10"><polyline points="1.5,8 6,3.5 10.5,8" fill="none" stroke="#ddd" stroke-width="1.2"/></svg>
<div style="position:absolute;left:986.70px;top:585.00px;width:8.00px;height:40.60px;background:#dcdcdc"></div>
<svg style="position:absolute;left:984.00px;top:709.00px;" width="12" height="10" viewBox="0 0 12 10"><polyline points="1.5,2 6,6.5 10.5,2" fill="none" stroke="#ddd" stroke-width="1.2"/></svg>
<div style="position:absolute;left:1.00px;top:720.00px;width:981.00px;height:18.00px;background:#fdfdfd"></div>
<div style="position:absolute;left:1.00px;top:720.00px;width:981.00px;height:1.00px;background:#e9e8e6"></div>
<div style="position:absolute;left:15.00px;top:725.00px;width:283.00px;height:9.00px;background:#e2e2e2"></div>
<svg style="position:absolute;left:3.00px;top:723.00px;" width="10" height="12" viewBox="0 0 10 12"><polyline points="7.5,1.5 3,6 7.5,10.5" fill="none" stroke="#ddd" stroke-width="1.2"/></svg>
<svg style="position:absolute;left:969.00px;top:723.00px;" width="10" height="12" viewBox="0 0 10 12"><polyline points="2.5,1.5 7,6 2.5,10.5" fill="none" stroke="#ddd" stroke-width="1.2"/></svg>
<div style="position:absolute;left:982.00px;top:720.00px;width:16.60px;height:18.00px;background:#f3f2f0"></div>
<div style="position:absolute;left:1.00px;top:738.00px;width:998.00px;height:1.00px;background:#e0dedb"></div>
<div style="position:absolute;left:1.00px;top:739.00px;width:998.00px;height:41.00px;background:#f8f7f6"></div>
<div style="position:absolute;left:19.20px;top:751.50px;width:2.20px;height:2.20px;background:#555;border-radius:50%"></div>
<div style="position:absolute;left:19.20px;top:757.00px;width:2.20px;height:2.20px;background:#555;border-radius:50%"></div>
<div style="position:absolute;left:19.20px;top:762.50px;width:2.20px;height:2.20px;background:#555;border-radius:50%"></div>
<div class="t" style="left:55.00px;top:750.90px;font-size:14.30px;font-weight:700;color:#222;transform:scaleX(0.9011);-webkit-text-stroke-width:0.05px;">Dokument</div>
<div style="position:absolute;left:57.00px;top:772.00px;width:62.00px;height:4.00px;background:#00a3e0"></div>
<div class="t" style="left:151.50px;top:750.90px;font-size:14.30px;font-weight:400;color:#5a5a5a;transform:scaleX(0.9548);">Dowód</div>
<div class="t" style="left:229.00px;top:750.90px;font-size:14.30px;font-weight:400;color:#5a5a5a;transform:scaleX(0.9705);">Dowód z wymiarami kontrolingowymi</div>
<div class="t" style="left:492.50px;top:750.90px;font-size:14.30px;font-weight:400;color:#5a5a5a;transform:scaleX(0.9754);">Historia operacji</div>
<div class="t" style="left:627.50px;top:750.90px;font-size:14.30px;font-weight:400;color:#5a5a5a;transform:scaleX(0.9497);">Dodatkowe dane dla JPK</div>
<div class="t" style="left:814.00px;top:750.90px;font-size:14.30px;font-weight:400;color:#5a5a5a;transform:scaleX(0.9696);">Kontrole biznesowe</div>
<div style="position:absolute;left:1.00px;top:776.00px;width:998.00px;height:1.00px;background:#dedcd9"></div>
<svg style="position:absolute;left:492.00px;top:739.00px;" width="16" height="3" viewBox="0 0 16 3"><line x1="0.5" y1="1" x2="15" y2="1" stroke="#aaa" stroke-width="0.8" stroke-dasharray="3,1.5"/></svg>
<div style="position:absolute;left:317px;top:182px;width:481.5px;height:495px;border-radius:5px 3px 3px 5px;box-shadow:0 3px 14px rgba(0,0,0,0.28), 0 0 3px rgba(0,0,0,0.12);background:#fff"></div>
<div style="position:absolute;left:317px;top:182px;width:481.5px;height:495px;border-radius:5px 3px 3px 5px;box-sizing:border-box;border-left:7.6px solid #00a3e0;border-top:3px solid #00a3e0;border-right:1px solid #c4e8f7;background:#fff"></div>
<div class="t" style="left:353.60px;top:196.41px;font-size:17.00px;font-weight:400;color:#151515;transform:scaleX(0.9607);-webkit-text-stroke:0.25px #151515;">Generuj dokumenty zbiorcze na podstawie paragonów</div>
<svg style="position:absolute;left:771.00px;top:199.20px;" width="16" height="16" viewBox="0 0 16 16"><line x1="1" y1="1" x2="14.8" y2="14.8" stroke="#b3b3b3" stroke-width="1.6"/><line x1="14.8" y1="1" x2="1" y2="14.8" stroke="#b3b3b3" stroke-width="1.6"/></svg>
<div class="t" style="left:351.40px;top:245.10px;font-size:14.30px;font-weight:400;color:#333;transform:scaleX(0.9705);">Dokument zbiorczy</div>
<div style="position:absolute;left:351.00px;top:266.40px;width:314.00px;height:324.60px;border:1px solid #ececec;box-sizing:border-box"></div>
<div class="t" style="left:421.40px;top:292.60px;font-size:14.30px;font-weight:400;color:#222;transform:scaleX(0.9435);">Rodzaj dowodu</div>
<div style="position:absolute;left:522.00px;top:287.30px;width:118.00px;height:24.20px;border:1px solid #c9c9c9;box-sizing:border-box;background:#fff"></div>
<div class="t" style="left:527.60px;top:292.50px;font-size:14.30px;font-weight:400;color:#222;transform:scaleX(0.8927);">ZPAR</div>
<svg style="position:absolute;left:625.00px;top:296.80px;" width="11" height="7" viewBox="0 0 11 7"><polyline points="1,1.2 5,5 9,1.2" fill="none" stroke="#bdbdbd" stroke-width="1"/></svg>
<div class="t" style="left:380.80px;top:325.20px;font-size:14.30px;font-weight:400;color:#222;transform:scaleX(0.9605);">Schemat księgowania</div>
<div style="position:absolute;left:522.00px;top:320.30px;width:118.00px;height:24.20px;border:1px solid #c9c9c9;box-sizing:border-box;background:#fff"></div>
<div class="t" style="left:527.60px;top:325.50px;font-size:14.30px;font-weight:400;color:#222;transform:scaleX(0.8548);">SPRZ_ROV_FK</div>
<svg style="position:absolute;left:625.00px;top:329.80px;" width="11" height="7" viewBox="0 0 11 7"><polyline points="1,1.2 5,5 9,1.2" fill="none" stroke="#bdbdbd" stroke-width="1"/></svg>
<div style="position:absolute;left:522.00px;top:357.00px;width:15.20px;height:15.00px;background:#1a86c2;border-radius:1px"></div>
<svg style="position:absolute;left:522.00px;top:357.00px;" width="16" height="15" viewBox="0 0 16 15"><polyline points="3.3,7.6 6.4,10.7 12.2,4.4" fill="none" stroke="#fff" stroke-width="1.6"/></svg>
<div class="t" style="left:545.60px;top:358.10px;font-size:14.30px;font-weight:400;color:#222;transform:scaleX(0.9324);">Brulion</div>
<div style="position:absolute;left:376.40px;top:417.00px;width:249.20px;height:89.00px;border:1px solid #e6e6e6;box-sizing:border-box"></div>
<div style="position:absolute;left:377.40px;top:418.00px;width:247.20px;height:16.70px;background:#efefef"></div>
<div class="t" style="left:383.50px;top:418.50px;font-size:14.30px;font-weight:400;color:#2a2a2a;transform:scaleX(0.9621);">Rodzaj grupowania dokumentów</div>
<svg style="position:absolute;left:380.00px;top:445.00px;" width="18" height="18" viewBox="0 0 18 18"><circle cx="8.8" cy="8.4" r="7.3" fill="#fff" stroke="#b5b5b5" stroke-width="1.2"/></svg>
<div class="t" style="left:403.60px;top:445.70px;font-size:14.30px;font-weight:400;color:#222;transform:scaleX(0.9503);">dzienne</div>
<svg style="position:absolute;left:380.00px;top:479.30px;" width="18" height="18" viewBox="0 0 18 18"><circle cx="8.8" cy="8.4" r="7.3" fill="#fff" stroke="#b5b5b5" stroke-width="1.2"/><circle cx="8.8" cy="8.4" r="4" fill="#0a84c2"/></svg>
<div class="t" style="left:403.60px;top:479.70px;font-size:14.30px;font-weight:400;color:#222;transform:scaleX(0.9647);">miesięczne</div>
<div class="t" style="left:467.70px;top:520.50px;font-size:14.30px;font-weight:400;color:#222;transform:scaleX(0.9285);">Data od</div>
<div style="position:absolute;left:522.00px;top:515.40px;width:118.00px;height:23.60px;border:1px solid #1a86c2;box-sizing:border-box;background:#fff"></div>
<div class="t" style="left:527.00px;top:520.50px;font-size:14.30px;font-weight:400;color:#222;transform:scaleX(0.9502);">2020.10.01</div>
<svg style="position:absolute;left:622.50px;top:520.60px;" width="12" height="13" viewBox="0 0 12 13"><rect x="1.3" y="2.3" width="9.6" height="9.5" rx="1" fill="none" stroke="#1a86c2" stroke-width="1.5"/><rect x="1" y="2" width="10.2" height="2.6" fill="#1a86c2"/><rect x="2.6" y="0.6" width="1.6" height="2" fill="#1a86c2"/><rect x="8" y="0.6" width="1.6" height="2" fill="#1a86c2"/><rect x="6.6" y="6.9" width="2.2" height="2.2" fill="#1a86c2"/></svg>
<div class="t" style="left:467.70px;top:553.10px;font-size:14.30px;font-weight:400;color:#222;transform:scaleX(0.9285);">Data do</div>
<div style="position:absolute;left:522.00px;top:548.00px;width:118.00px;height:23.60px;border:1px solid #c9c9c9;box-sizing:border-box;background:#fff"></div>
<div class="t" style="left:527.00px;top:553.10px;font-size:14.30px;font-weight:400;color:#222;transform:scaleX(0.9502);">2020.10.31</div>
<svg style="position:absolute;left:622.50px;top:553.20px;" width="12" height="13" viewBox="0 0 12 13"><rect x="1.3" y="2.3" width="9.6" height="9.5" rx="1" fill="none" stroke="#c6c6c6" stroke-width="1.5"/><rect x="1" y="2" width="10.2" height="2.6" fill="#c6c6c6"/><rect x="2.6" y="0.6" width="1.6" height="2" fill="#c6c6c6"/><rect x="8" y="0.6" width="1.6" height="2" fill="#c6c6c6"/><rect x="6.6" y="6.9" width="2.2" height="2.2" fill="#c6c6c6"/></svg>
<svg style="position:absolute;left:352.00px;top:632.00px;" width="28" height="24" viewBox="0 0 28 24"><polygon points="15.26,13.23 17.20,13.22 17.20,16.58 15.26,16.57 14.17,18.45 15.16,20.12 12.24,21.80 11.29,20.12 9.11,20.12 8.16,21.80 5.24,20.12 6.23,18.45 5.14,16.57 3.20,16.58 3.20,13.22 5.14,13.23 6.23,11.35 5.24,9.68 8.16,8.00 9.11,9.68 11.29,9.68 12.24,8.00 15.16,9.68 14.17,11.35" fill="#fff" stroke="#3a3a3a" stroke-width="1.3" stroke-linejoin="round"/><circle cx="10.20" cy="14.90" r="2.10" fill="none" stroke="#3a3a3a" stroke-width="1.3"/><circle cx="18.50" cy="6.00" r="2.40" fill="none" stroke="#3a3a3a" stroke-width="1.50"/><line x1="21.40" y1="6.00" x2="23.00" y2="6.00" stroke="#3a3a3a" stroke-width="1.80"/><line x1="19.95" y1="8.51" x2="20.75" y2="9.90" stroke="#3a3a3a" stroke-width="1.80"/><line x1="17.05" y1="8.51" x2="16.25" y2="9.90" stroke="#3a3a3a" stroke-width="1.80"/><line x1="15.60" y1="6.00" x2="14.00" y2="6.00" stroke="#3a3a3a" stroke-width="1.80"/><line x1="17.05" y1="3.49" x2="16.25" y2="2.10" stroke="#3a3a3a" stroke-width="1.80"/><line x1="19.95" y1="3.49" x2="20.75" y2="2.10" stroke="#3a3a3a" stroke-width="1.80"/></svg>
<svg style="position:absolute;left:384.20px;top:641.00px;" width="9.6" height="6" viewBox="0 0 9.6 6"><polyline points="1,1 4.80,5.00 8.60,1" fill="none" stroke="#222" stroke-width="1.5" stroke-linecap="round" stroke-linejoin="round"/></svg>
<div style="position:absolute;left:549.30px;top:628.40px;width:111.30px;height:31.40px;background:#0a82b8;border-radius:2px"></div>
<div class="t" style="left:595.25px;top:637.40px;font-size:14.30px;font-weight:400;color:#fff;transform:scaleX(0.9438);">OK</div>
<div style="position:absolute;left:674.40px;top:628.80px;width:111.80px;height:31.00px;border:1px solid #c6c6c6;border-radius:3px;box-sizing:border-box;background:#fff"></div>
<div class="t" style="left:711.05px;top:637.40px;font-size:14.30px;font-weight:400;color:#222;transform:scaleX(0.9686);">Anuluj</div>
<div style="position:absolute;left:0.00px;top:33.00px;width:1.00px;height:748.00px;background:#00a3e0"></div>
<div style="position:absolute;left:998.60px;top:33.00px;width:1.40px;height:748.00px;background:#00a3e0"></div>
<div style="position:absolute;left:0.00px;top:780.00px;width:1000.00px;height:1.00px;background:#00a3e0"></div>
</div>
</body></html>
